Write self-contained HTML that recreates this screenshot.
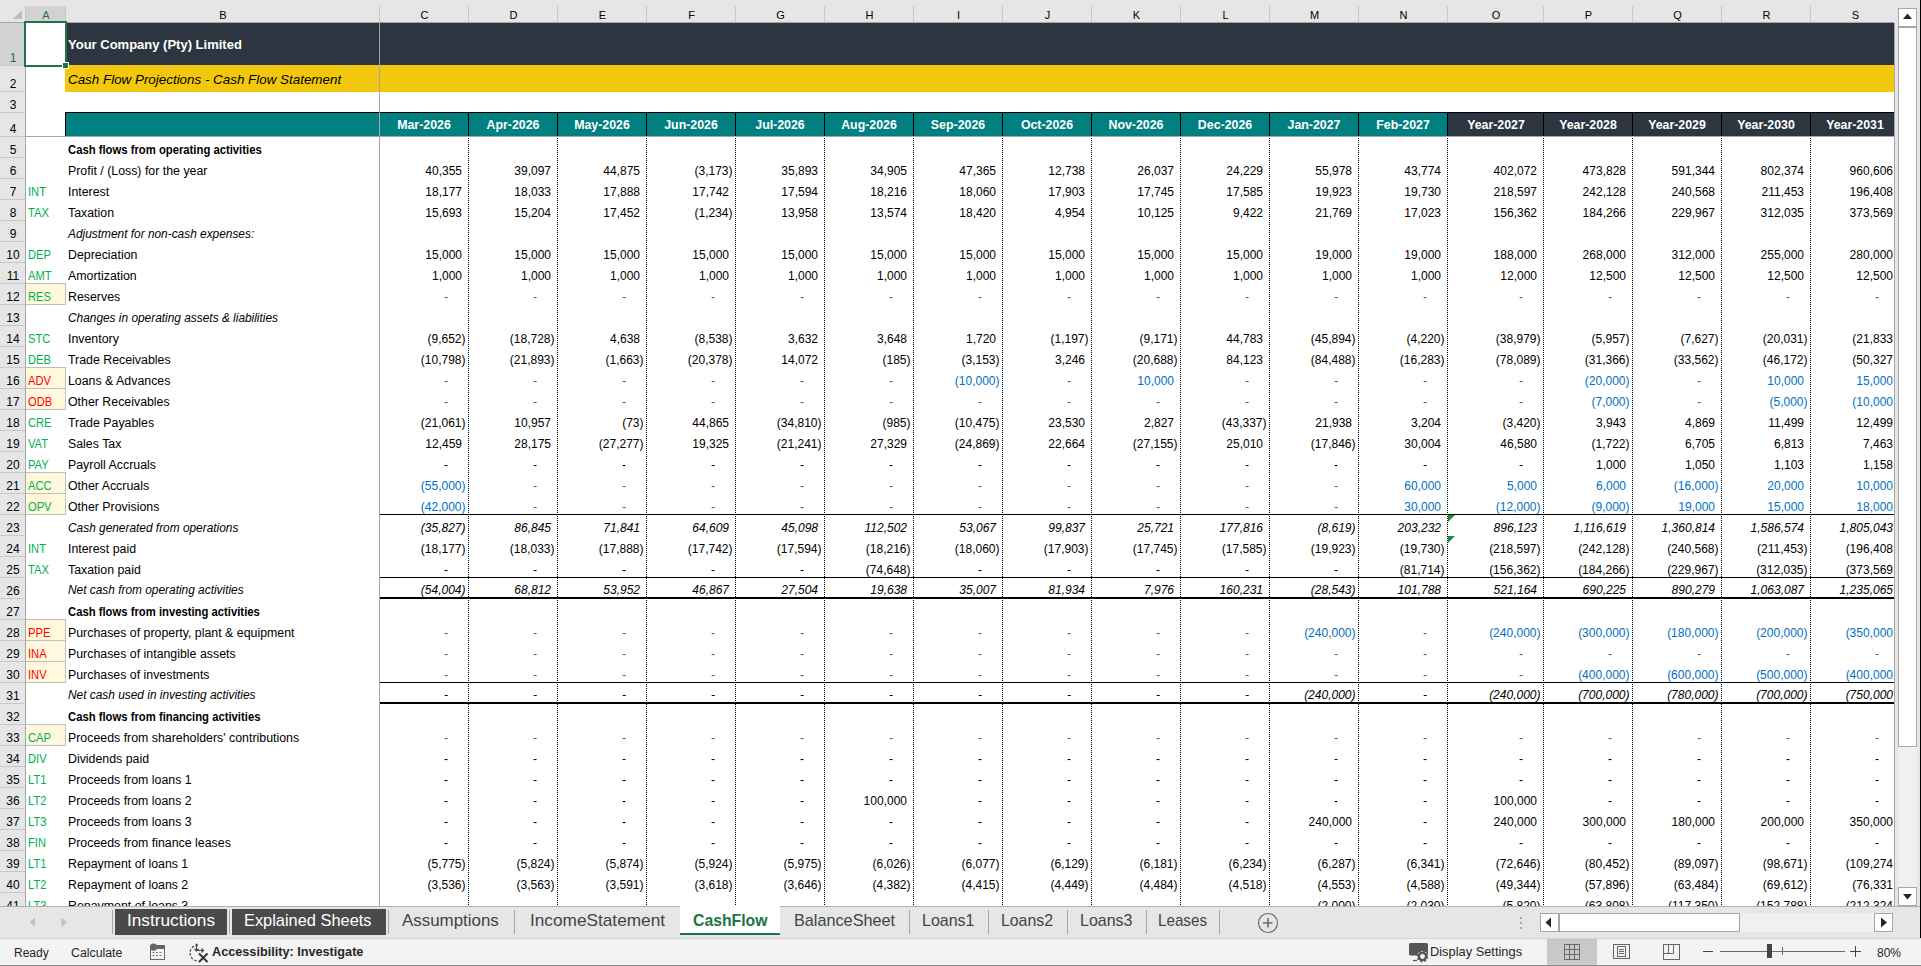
<!DOCTYPE html><html><head><meta charset="utf-8"><style>html,body{margin:0;padding:0;width:1921px;height:966px;overflow:hidden;background:#fff;}body{position:relative;font-family:"Liberation Sans", sans-serif;}div{position:absolute;box-sizing:border-box;}.t{white-space:pre;}svg{position:absolute;}</style></head><body><div style="left:0;top:0;width:1894px;height:906px;overflow:hidden;background:#fff;"><div style="left:65px;top:23px;width:1829px;height:42px;background:#2d3640;"></div><div style="left:65px;top:65px;width:1829px;height:27px;background:#f2c80f;"></div><div style="left:65px;top:112px;width:1829px;height:1px;background:#000;"></div><div style="left:65px;top:113px;width:1382px;height:23px;background:#008080;"></div><div style="left:1447px;top:113px;width:447px;height:23px;background:#2d3640;"></div><div style="left:65px;top:112px;width:1px;height:24px;background:#000;"></div><div style="left:468px;top:112px;width:1px;height:24px;background:#000;"></div><div style="left:557px;top:112px;width:1px;height:24px;background:#000;"></div><div style="left:646px;top:112px;width:1px;height:24px;background:#000;"></div><div style="left:735px;top:112px;width:1px;height:24px;background:#000;"></div><div style="left:824px;top:112px;width:1px;height:24px;background:#000;"></div><div style="left:913px;top:112px;width:1px;height:24px;background:#000;"></div><div style="left:1002px;top:112px;width:1px;height:24px;background:#000;"></div><div style="left:1091px;top:112px;width:1px;height:24px;background:#000;"></div><div style="left:1180px;top:112px;width:1px;height:24px;background:#000;"></div><div style="left:1269px;top:112px;width:1px;height:24px;background:#000;"></div><div style="left:1358px;top:112px;width:1px;height:24px;background:#000;"></div><div style="left:1447px;top:112px;width:1px;height:24px;background:#000;"></div><div style="left:1543px;top:112px;width:1px;height:24px;background:#000;"></div><div style="left:1632px;top:112px;width:1px;height:24px;background:#000;"></div><div style="left:1721px;top:112px;width:1px;height:24px;background:#000;"></div><div style="left:1810px;top:112px;width:1px;height:24px;background:#000;"></div><div style="left:25px;top:283px;width:41px;height:22px;background:#fff8dc;border:1px solid #bfbfbf;"></div><div style="left:25px;top:367px;width:41px;height:22px;background:#fff8dc;border:1px solid #bfbfbf;"></div><div style="left:25px;top:388px;width:41px;height:22px;background:#fff8dc;border:1px solid #bfbfbf;"></div><div style="left:25px;top:472px;width:41px;height:22px;background:#fff8dc;border:1px solid #bfbfbf;"></div><div style="left:25px;top:493px;width:41px;height:22px;background:#fff8dc;border:1px solid #bfbfbf;"></div><div style="left:25px;top:619px;width:41px;height:22px;background:#fff8dc;border:1px solid #bfbfbf;"></div><div style="left:25px;top:640px;width:41px;height:22px;background:#fff8dc;border:1px solid #bfbfbf;"></div><div style="left:25px;top:661px;width:41px;height:22px;background:#fff8dc;border:1px solid #bfbfbf;"></div><div style="left:25px;top:724px;width:41px;height:22px;background:#fff8dc;border:1px solid #bfbfbf;"></div><div style="left:468px;top:138px;width:1px;height:768px;background:repeating-linear-gradient(to bottom,#000 0,#000 1px,transparent 1px,transparent 2px);"></div><div style="left:557px;top:138px;width:1px;height:768px;background:repeating-linear-gradient(to bottom,#000 0,#000 1px,transparent 1px,transparent 2px);"></div><div style="left:646px;top:138px;width:1px;height:768px;background:repeating-linear-gradient(to bottom,#000 0,#000 1px,transparent 1px,transparent 2px);"></div><div style="left:735px;top:138px;width:1px;height:768px;background:repeating-linear-gradient(to bottom,#000 0,#000 1px,transparent 1px,transparent 2px);"></div><div style="left:824px;top:138px;width:1px;height:768px;background:repeating-linear-gradient(to bottom,#000 0,#000 1px,transparent 1px,transparent 2px);"></div><div style="left:913px;top:138px;width:1px;height:768px;background:repeating-linear-gradient(to bottom,#000 0,#000 1px,transparent 1px,transparent 2px);"></div><div style="left:1002px;top:138px;width:1px;height:768px;background:repeating-linear-gradient(to bottom,#000 0,#000 1px,transparent 1px,transparent 2px);"></div><div style="left:1091px;top:138px;width:1px;height:768px;background:repeating-linear-gradient(to bottom,#000 0,#000 1px,transparent 1px,transparent 2px);"></div><div style="left:1180px;top:138px;width:1px;height:768px;background:repeating-linear-gradient(to bottom,#000 0,#000 1px,transparent 1px,transparent 2px);"></div><div style="left:1269px;top:138px;width:1px;height:768px;background:repeating-linear-gradient(to bottom,#000 0,#000 1px,transparent 1px,transparent 2px);"></div><div style="left:1358px;top:138px;width:1px;height:768px;background:repeating-linear-gradient(to bottom,#000 0,#000 1px,transparent 1px,transparent 2px);"></div><div style="left:1447px;top:138px;width:1px;height:768px;background:repeating-linear-gradient(to bottom,#000 0,#000 1px,transparent 1px,transparent 2px);"></div><div style="left:1543px;top:138px;width:1px;height:768px;background:repeating-linear-gradient(to bottom,#000 0,#000 1px,transparent 1px,transparent 2px);"></div><div style="left:1632px;top:138px;width:1px;height:768px;background:repeating-linear-gradient(to bottom,#000 0,#000 1px,transparent 1px,transparent 2px);"></div><div style="left:1721px;top:138px;width:1px;height:768px;background:repeating-linear-gradient(to bottom,#000 0,#000 1px,transparent 1px,transparent 2px);"></div><div style="left:1810px;top:138px;width:1px;height:768px;background:repeating-linear-gradient(to bottom,#000 0,#000 1px,transparent 1px,transparent 2px);"></div><div style="left:379px;top:514px;width:1515px;height:1px;background:#000;"></div><div style="left:379px;top:577px;width:1515px;height:1px;background:#000;"></div><div style="left:379px;top:597px;width:1515px;height:2px;background:#000;"></div><div style="left:379px;top:682px;width:1515px;height:1px;background:#000;"></div><div style="left:379px;top:702px;width:1515px;height:2px;background:#000;"></div><div class="t" style="left:68px;top:38.00px;font-size:13px;line-height:13px;color:#fff;font-weight:bold;">Your Company (Pty) Limited</div><div class="t" style="left:68px;top:72.66px;font-size:13.4px;line-height:13.4px;color:#000;font-style:italic;">Cash Flow Projections - Cash Flow Statement</div><div class="t" style="left:224.0px;width:400px;text-align:center;top:118.84px;font-size:12px;line-height:12px;color:#fff;font-weight:bold;transform:scaleX(1.03);transform-origin:center center;">Mar-2026</div><div class="t" style="left:313.0px;width:400px;text-align:center;top:118.84px;font-size:12px;line-height:12px;color:#fff;font-weight:bold;transform:scaleX(1.03);transform-origin:center center;">Apr-2026</div><div class="t" style="left:402.0px;width:400px;text-align:center;top:118.84px;font-size:12px;line-height:12px;color:#fff;font-weight:bold;transform:scaleX(1.03);transform-origin:center center;">May-2026</div><div class="t" style="left:491.0px;width:400px;text-align:center;top:118.84px;font-size:12px;line-height:12px;color:#fff;font-weight:bold;transform:scaleX(1.03);transform-origin:center center;">Jun-2026</div><div class="t" style="left:580.0px;width:400px;text-align:center;top:118.84px;font-size:12px;line-height:12px;color:#fff;font-weight:bold;transform:scaleX(1.03);transform-origin:center center;">Jul-2026</div><div class="t" style="left:669.0px;width:400px;text-align:center;top:118.84px;font-size:12px;line-height:12px;color:#fff;font-weight:bold;transform:scaleX(1.03);transform-origin:center center;">Aug-2026</div><div class="t" style="left:758.0px;width:400px;text-align:center;top:118.84px;font-size:12px;line-height:12px;color:#fff;font-weight:bold;transform:scaleX(1.03);transform-origin:center center;">Sep-2026</div><div class="t" style="left:847.0px;width:400px;text-align:center;top:118.84px;font-size:12px;line-height:12px;color:#fff;font-weight:bold;transform:scaleX(1.03);transform-origin:center center;">Oct-2026</div><div class="t" style="left:936.0px;width:400px;text-align:center;top:118.84px;font-size:12px;line-height:12px;color:#fff;font-weight:bold;transform:scaleX(1.03);transform-origin:center center;">Nov-2026</div><div class="t" style="left:1025.0px;width:400px;text-align:center;top:118.84px;font-size:12px;line-height:12px;color:#fff;font-weight:bold;transform:scaleX(1.03);transform-origin:center center;">Dec-2026</div><div class="t" style="left:1114.0px;width:400px;text-align:center;top:118.84px;font-size:12px;line-height:12px;color:#fff;font-weight:bold;transform:scaleX(1.03);transform-origin:center center;">Jan-2027</div><div class="t" style="left:1203.0px;width:400px;text-align:center;top:118.84px;font-size:12px;line-height:12px;color:#fff;font-weight:bold;transform:scaleX(1.03);transform-origin:center center;">Feb-2027</div><div class="t" style="left:1295.5px;width:400px;text-align:center;top:118.84px;font-size:12px;line-height:12px;color:#fff;font-weight:bold;transform:scaleX(1.03);transform-origin:center center;">Year-2027</div><div class="t" style="left:1388.0px;width:400px;text-align:center;top:118.84px;font-size:12px;line-height:12px;color:#fff;font-weight:bold;transform:scaleX(1.03);transform-origin:center center;">Year-2028</div><div class="t" style="left:1477.0px;width:400px;text-align:center;top:118.84px;font-size:12px;line-height:12px;color:#fff;font-weight:bold;transform:scaleX(1.03);transform-origin:center center;">Year-2029</div><div class="t" style="left:1566.0px;width:400px;text-align:center;top:118.84px;font-size:12px;line-height:12px;color:#fff;font-weight:bold;transform:scaleX(1.03);transform-origin:center center;">Year-2030</div><div class="t" style="left:1655.0px;width:400px;text-align:center;top:118.84px;font-size:12px;line-height:12px;color:#fff;font-weight:bold;transform:scaleX(1.03);transform-origin:center center;">Year-2031</div><div class="t" style="left:68px;top:143.84px;font-size:12px;line-height:12px;color:#000;font-weight:bold;transform:scaleX(0.94);transform-origin:left center;">Cash flows from operating activities</div><div class="t" style="left:68px;top:164.84px;font-size:12px;line-height:12px;color:#000;transform:scaleX(1.03);transform-origin:left center;">Profit / (Loss) for the year</div><div class="t" style="left:62px;width:400px;text-align:right;top:164.84px;font-size:12px;line-height:12px;color:#000;">40,355</div><div class="t" style="left:151px;width:400px;text-align:right;top:164.84px;font-size:12px;line-height:12px;color:#000;">39,097</div><div class="t" style="left:240px;width:400px;text-align:right;top:164.84px;font-size:12px;line-height:12px;color:#000;">44,875</div><div class="t" style="left:332.5px;width:400px;text-align:right;top:164.84px;font-size:12px;line-height:12px;color:#000;">(3,173)</div><div class="t" style="left:418px;width:400px;text-align:right;top:164.84px;font-size:12px;line-height:12px;color:#000;">35,893</div><div class="t" style="left:507px;width:400px;text-align:right;top:164.84px;font-size:12px;line-height:12px;color:#000;">34,905</div><div class="t" style="left:596px;width:400px;text-align:right;top:164.84px;font-size:12px;line-height:12px;color:#000;">47,365</div><div class="t" style="left:685px;width:400px;text-align:right;top:164.84px;font-size:12px;line-height:12px;color:#000;">12,738</div><div class="t" style="left:774px;width:400px;text-align:right;top:164.84px;font-size:12px;line-height:12px;color:#000;">26,037</div><div class="t" style="left:863px;width:400px;text-align:right;top:164.84px;font-size:12px;line-height:12px;color:#000;">24,229</div><div class="t" style="left:952px;width:400px;text-align:right;top:164.84px;font-size:12px;line-height:12px;color:#000;">55,978</div><div class="t" style="left:1041px;width:400px;text-align:right;top:164.84px;font-size:12px;line-height:12px;color:#000;">43,774</div><div class="t" style="left:1137px;width:400px;text-align:right;top:164.84px;font-size:12px;line-height:12px;color:#000;">402,072</div><div class="t" style="left:1226px;width:400px;text-align:right;top:164.84px;font-size:12px;line-height:12px;color:#000;">473,828</div><div class="t" style="left:1315px;width:400px;text-align:right;top:164.84px;font-size:12px;line-height:12px;color:#000;">591,344</div><div class="t" style="left:1404px;width:400px;text-align:right;top:164.84px;font-size:12px;line-height:12px;color:#000;">802,374</div><div class="t" style="left:1493px;width:400px;text-align:right;top:164.84px;font-size:12px;line-height:12px;color:#000;">960,606</div><div class="t" style="left:28px;top:185.84px;font-size:12px;line-height:12px;color:#00b050;transform:scaleX(0.93);transform-origin:left center;">INT</div><div class="t" style="left:68px;top:185.84px;font-size:12px;line-height:12px;color:#000;transform:scaleX(1.03);transform-origin:left center;">Interest</div><div class="t" style="left:62px;width:400px;text-align:right;top:185.84px;font-size:12px;line-height:12px;color:#000;">18,177</div><div class="t" style="left:151px;width:400px;text-align:right;top:185.84px;font-size:12px;line-height:12px;color:#000;">18,033</div><div class="t" style="left:240px;width:400px;text-align:right;top:185.84px;font-size:12px;line-height:12px;color:#000;">17,888</div><div class="t" style="left:329px;width:400px;text-align:right;top:185.84px;font-size:12px;line-height:12px;color:#000;">17,742</div><div class="t" style="left:418px;width:400px;text-align:right;top:185.84px;font-size:12px;line-height:12px;color:#000;">17,594</div><div class="t" style="left:507px;width:400px;text-align:right;top:185.84px;font-size:12px;line-height:12px;color:#000;">18,216</div><div class="t" style="left:596px;width:400px;text-align:right;top:185.84px;font-size:12px;line-height:12px;color:#000;">18,060</div><div class="t" style="left:685px;width:400px;text-align:right;top:185.84px;font-size:12px;line-height:12px;color:#000;">17,903</div><div class="t" style="left:774px;width:400px;text-align:right;top:185.84px;font-size:12px;line-height:12px;color:#000;">17,745</div><div class="t" style="left:863px;width:400px;text-align:right;top:185.84px;font-size:12px;line-height:12px;color:#000;">17,585</div><div class="t" style="left:952px;width:400px;text-align:right;top:185.84px;font-size:12px;line-height:12px;color:#000;">19,923</div><div class="t" style="left:1041px;width:400px;text-align:right;top:185.84px;font-size:12px;line-height:12px;color:#000;">19,730</div><div class="t" style="left:1137px;width:400px;text-align:right;top:185.84px;font-size:12px;line-height:12px;color:#000;">218,597</div><div class="t" style="left:1226px;width:400px;text-align:right;top:185.84px;font-size:12px;line-height:12px;color:#000;">242,128</div><div class="t" style="left:1315px;width:400px;text-align:right;top:185.84px;font-size:12px;line-height:12px;color:#000;">240,568</div><div class="t" style="left:1404px;width:400px;text-align:right;top:185.84px;font-size:12px;line-height:12px;color:#000;">211,453</div><div class="t" style="left:1493px;width:400px;text-align:right;top:185.84px;font-size:12px;line-height:12px;color:#000;">196,408</div><div class="t" style="left:28px;top:206.84px;font-size:12px;line-height:12px;color:#00b050;transform:scaleX(0.93);transform-origin:left center;">TAX</div><div class="t" style="left:68px;top:206.84px;font-size:12px;line-height:12px;color:#000;transform:scaleX(1.03);transform-origin:left center;">Taxation</div><div class="t" style="left:62px;width:400px;text-align:right;top:206.84px;font-size:12px;line-height:12px;color:#000;">15,693</div><div class="t" style="left:151px;width:400px;text-align:right;top:206.84px;font-size:12px;line-height:12px;color:#000;">15,204</div><div class="t" style="left:240px;width:400px;text-align:right;top:206.84px;font-size:12px;line-height:12px;color:#000;">17,452</div><div class="t" style="left:332.5px;width:400px;text-align:right;top:206.84px;font-size:12px;line-height:12px;color:#000;">(1,234)</div><div class="t" style="left:418px;width:400px;text-align:right;top:206.84px;font-size:12px;line-height:12px;color:#000;">13,958</div><div class="t" style="left:507px;width:400px;text-align:right;top:206.84px;font-size:12px;line-height:12px;color:#000;">13,574</div><div class="t" style="left:596px;width:400px;text-align:right;top:206.84px;font-size:12px;line-height:12px;color:#000;">18,420</div><div class="t" style="left:685px;width:400px;text-align:right;top:206.84px;font-size:12px;line-height:12px;color:#000;">4,954</div><div class="t" style="left:774px;width:400px;text-align:right;top:206.84px;font-size:12px;line-height:12px;color:#000;">10,125</div><div class="t" style="left:863px;width:400px;text-align:right;top:206.84px;font-size:12px;line-height:12px;color:#000;">9,422</div><div class="t" style="left:952px;width:400px;text-align:right;top:206.84px;font-size:12px;line-height:12px;color:#000;">21,769</div><div class="t" style="left:1041px;width:400px;text-align:right;top:206.84px;font-size:12px;line-height:12px;color:#000;">17,023</div><div class="t" style="left:1137px;width:400px;text-align:right;top:206.84px;font-size:12px;line-height:12px;color:#000;">156,362</div><div class="t" style="left:1226px;width:400px;text-align:right;top:206.84px;font-size:12px;line-height:12px;color:#000;">184,266</div><div class="t" style="left:1315px;width:400px;text-align:right;top:206.84px;font-size:12px;line-height:12px;color:#000;">229,967</div><div class="t" style="left:1404px;width:400px;text-align:right;top:206.84px;font-size:12px;line-height:12px;color:#000;">312,035</div><div class="t" style="left:1493px;width:400px;text-align:right;top:206.84px;font-size:12px;line-height:12px;color:#000;">373,569</div><div class="t" style="left:68px;top:227.84px;font-size:12px;line-height:12px;color:#000;font-style:italic;transform:scaleX(0.99);transform-origin:left center;">Adjustment for non-cash expenses:</div><div class="t" style="left:28px;top:248.84px;font-size:12px;line-height:12px;color:#00b050;transform:scaleX(0.93);transform-origin:left center;">DEP</div><div class="t" style="left:68px;top:248.84px;font-size:12px;line-height:12px;color:#000;transform:scaleX(1.03);transform-origin:left center;">Depreciation</div><div class="t" style="left:62px;width:400px;text-align:right;top:248.84px;font-size:12px;line-height:12px;color:#000;">15,000</div><div class="t" style="left:151px;width:400px;text-align:right;top:248.84px;font-size:12px;line-height:12px;color:#000;">15,000</div><div class="t" style="left:240px;width:400px;text-align:right;top:248.84px;font-size:12px;line-height:12px;color:#000;">15,000</div><div class="t" style="left:329px;width:400px;text-align:right;top:248.84px;font-size:12px;line-height:12px;color:#000;">15,000</div><div class="t" style="left:418px;width:400px;text-align:right;top:248.84px;font-size:12px;line-height:12px;color:#000;">15,000</div><div class="t" style="left:507px;width:400px;text-align:right;top:248.84px;font-size:12px;line-height:12px;color:#000;">15,000</div><div class="t" style="left:596px;width:400px;text-align:right;top:248.84px;font-size:12px;line-height:12px;color:#000;">15,000</div><div class="t" style="left:685px;width:400px;text-align:right;top:248.84px;font-size:12px;line-height:12px;color:#000;">15,000</div><div class="t" style="left:774px;width:400px;text-align:right;top:248.84px;font-size:12px;line-height:12px;color:#000;">15,000</div><div class="t" style="left:863px;width:400px;text-align:right;top:248.84px;font-size:12px;line-height:12px;color:#000;">15,000</div><div class="t" style="left:952px;width:400px;text-align:right;top:248.84px;font-size:12px;line-height:12px;color:#000;">19,000</div><div class="t" style="left:1041px;width:400px;text-align:right;top:248.84px;font-size:12px;line-height:12px;color:#000;">19,000</div><div class="t" style="left:1137px;width:400px;text-align:right;top:248.84px;font-size:12px;line-height:12px;color:#000;">188,000</div><div class="t" style="left:1226px;width:400px;text-align:right;top:248.84px;font-size:12px;line-height:12px;color:#000;">268,000</div><div class="t" style="left:1315px;width:400px;text-align:right;top:248.84px;font-size:12px;line-height:12px;color:#000;">312,000</div><div class="t" style="left:1404px;width:400px;text-align:right;top:248.84px;font-size:12px;line-height:12px;color:#000;">255,000</div><div class="t" style="left:1493px;width:400px;text-align:right;top:248.84px;font-size:12px;line-height:12px;color:#000;">280,000</div><div class="t" style="left:28px;top:269.84px;font-size:12px;line-height:12px;color:#00b050;transform:scaleX(0.93);transform-origin:left center;">AMT</div><div class="t" style="left:68px;top:269.84px;font-size:12px;line-height:12px;color:#000;transform:scaleX(1.03);transform-origin:left center;">Amortization</div><div class="t" style="left:62px;width:400px;text-align:right;top:269.84px;font-size:12px;line-height:12px;color:#000;">1,000</div><div class="t" style="left:151px;width:400px;text-align:right;top:269.84px;font-size:12px;line-height:12px;color:#000;">1,000</div><div class="t" style="left:240px;width:400px;text-align:right;top:269.84px;font-size:12px;line-height:12px;color:#000;">1,000</div><div class="t" style="left:329px;width:400px;text-align:right;top:269.84px;font-size:12px;line-height:12px;color:#000;">1,000</div><div class="t" style="left:418px;width:400px;text-align:right;top:269.84px;font-size:12px;line-height:12px;color:#000;">1,000</div><div class="t" style="left:507px;width:400px;text-align:right;top:269.84px;font-size:12px;line-height:12px;color:#000;">1,000</div><div class="t" style="left:596px;width:400px;text-align:right;top:269.84px;font-size:12px;line-height:12px;color:#000;">1,000</div><div class="t" style="left:685px;width:400px;text-align:right;top:269.84px;font-size:12px;line-height:12px;color:#000;">1,000</div><div class="t" style="left:774px;width:400px;text-align:right;top:269.84px;font-size:12px;line-height:12px;color:#000;">1,000</div><div class="t" style="left:863px;width:400px;text-align:right;top:269.84px;font-size:12px;line-height:12px;color:#000;">1,000</div><div class="t" style="left:952px;width:400px;text-align:right;top:269.84px;font-size:12px;line-height:12px;color:#000;">1,000</div><div class="t" style="left:1041px;width:400px;text-align:right;top:269.84px;font-size:12px;line-height:12px;color:#000;">1,000</div><div class="t" style="left:1137px;width:400px;text-align:right;top:269.84px;font-size:12px;line-height:12px;color:#000;">12,000</div><div class="t" style="left:1226px;width:400px;text-align:right;top:269.84px;font-size:12px;line-height:12px;color:#000;">12,500</div><div class="t" style="left:1315px;width:400px;text-align:right;top:269.84px;font-size:12px;line-height:12px;color:#000;">12,500</div><div class="t" style="left:1404px;width:400px;text-align:right;top:269.84px;font-size:12px;line-height:12px;color:#000;">12,500</div><div class="t" style="left:1493px;width:400px;text-align:right;top:269.84px;font-size:12px;line-height:12px;color:#000;">12,500</div><div class="t" style="left:28px;top:290.84px;font-size:12px;line-height:12px;color:#00b050;transform:scaleX(0.93);transform-origin:left center;">RES</div><div class="t" style="left:68px;top:290.84px;font-size:12px;line-height:12px;color:#000;transform:scaleX(1.03);transform-origin:left center;">Reserves</div><div class="t" style="left:246px;width:400px;text-align:center;top:290.84px;font-size:12px;line-height:12px;color:#0070c0;">-</div><div class="t" style="left:335px;width:400px;text-align:center;top:290.84px;font-size:12px;line-height:12px;color:#0070c0;">-</div><div class="t" style="left:424px;width:400px;text-align:center;top:290.84px;font-size:12px;line-height:12px;color:#0070c0;">-</div><div class="t" style="left:513px;width:400px;text-align:center;top:290.84px;font-size:12px;line-height:12px;color:#0070c0;">-</div><div class="t" style="left:602px;width:400px;text-align:center;top:290.84px;font-size:12px;line-height:12px;color:#0070c0;">-</div><div class="t" style="left:691px;width:400px;text-align:center;top:290.84px;font-size:12px;line-height:12px;color:#0070c0;">-</div><div class="t" style="left:780px;width:400px;text-align:center;top:290.84px;font-size:12px;line-height:12px;color:#0070c0;">-</div><div class="t" style="left:869px;width:400px;text-align:center;top:290.84px;font-size:12px;line-height:12px;color:#0070c0;">-</div><div class="t" style="left:958px;width:400px;text-align:center;top:290.84px;font-size:12px;line-height:12px;color:#0070c0;">-</div><div class="t" style="left:1047px;width:400px;text-align:center;top:290.84px;font-size:12px;line-height:12px;color:#0070c0;">-</div><div class="t" style="left:1136px;width:400px;text-align:center;top:290.84px;font-size:12px;line-height:12px;color:#0070c0;">-</div><div class="t" style="left:1225px;width:400px;text-align:center;top:290.84px;font-size:12px;line-height:12px;color:#0070c0;">-</div><div class="t" style="left:1321px;width:400px;text-align:center;top:290.84px;font-size:12px;line-height:12px;color:#0070c0;">-</div><div class="t" style="left:1410px;width:400px;text-align:center;top:290.84px;font-size:12px;line-height:12px;color:#0070c0;">-</div><div class="t" style="left:1499px;width:400px;text-align:center;top:290.84px;font-size:12px;line-height:12px;color:#0070c0;">-</div><div class="t" style="left:1588px;width:400px;text-align:center;top:290.84px;font-size:12px;line-height:12px;color:#0070c0;">-</div><div class="t" style="left:1677px;width:400px;text-align:center;top:290.84px;font-size:12px;line-height:12px;color:#0070c0;">-</div><div class="t" style="left:68px;top:311.84px;font-size:12px;line-height:12px;color:#000;font-style:italic;transform:scaleX(0.99);transform-origin:left center;">Changes in operating assets &amp; liabilities</div><div class="t" style="left:28px;top:332.84px;font-size:12px;line-height:12px;color:#00b050;transform:scaleX(0.93);transform-origin:left center;">STC</div><div class="t" style="left:68px;top:332.84px;font-size:12px;line-height:12px;color:#000;transform:scaleX(1.03);transform-origin:left center;">Inventory</div><div class="t" style="left:65.5px;width:400px;text-align:right;top:332.84px;font-size:12px;line-height:12px;color:#000;">(9,652)</div><div class="t" style="left:154.5px;width:400px;text-align:right;top:332.84px;font-size:12px;line-height:12px;color:#000;">(18,728)</div><div class="t" style="left:240px;width:400px;text-align:right;top:332.84px;font-size:12px;line-height:12px;color:#000;">4,638</div><div class="t" style="left:332.5px;width:400px;text-align:right;top:332.84px;font-size:12px;line-height:12px;color:#000;">(8,538)</div><div class="t" style="left:418px;width:400px;text-align:right;top:332.84px;font-size:12px;line-height:12px;color:#000;">3,632</div><div class="t" style="left:507px;width:400px;text-align:right;top:332.84px;font-size:12px;line-height:12px;color:#000;">3,648</div><div class="t" style="left:596px;width:400px;text-align:right;top:332.84px;font-size:12px;line-height:12px;color:#000;">1,720</div><div class="t" style="left:688.5px;width:400px;text-align:right;top:332.84px;font-size:12px;line-height:12px;color:#000;">(1,197)</div><div class="t" style="left:777.5px;width:400px;text-align:right;top:332.84px;font-size:12px;line-height:12px;color:#000;">(9,171)</div><div class="t" style="left:863px;width:400px;text-align:right;top:332.84px;font-size:12px;line-height:12px;color:#000;">44,783</div><div class="t" style="left:955.5px;width:400px;text-align:right;top:332.84px;font-size:12px;line-height:12px;color:#000;">(45,894)</div><div class="t" style="left:1044.5px;width:400px;text-align:right;top:332.84px;font-size:12px;line-height:12px;color:#000;">(4,220)</div><div class="t" style="left:1140.5px;width:400px;text-align:right;top:332.84px;font-size:12px;line-height:12px;color:#000;">(38,979)</div><div class="t" style="left:1229.5px;width:400px;text-align:right;top:332.84px;font-size:12px;line-height:12px;color:#000;">(5,957)</div><div class="t" style="left:1318.5px;width:400px;text-align:right;top:332.84px;font-size:12px;line-height:12px;color:#000;">(7,627)</div><div class="t" style="left:1407.5px;width:400px;text-align:right;top:332.84px;font-size:12px;line-height:12px;color:#000;">(20,031)</div><div class="t" style="left:1493px;width:400px;text-align:right;top:332.84px;font-size:12px;line-height:12px;color:#000;">(21,833</div><div class="t" style="left:28px;top:353.84px;font-size:12px;line-height:12px;color:#00b050;transform:scaleX(0.93);transform-origin:left center;">DEB</div><div class="t" style="left:68px;top:353.84px;font-size:12px;line-height:12px;color:#000;transform:scaleX(1.03);transform-origin:left center;">Trade Receivables</div><div class="t" style="left:65.5px;width:400px;text-align:right;top:353.84px;font-size:12px;line-height:12px;color:#000;">(10,798)</div><div class="t" style="left:154.5px;width:400px;text-align:right;top:353.84px;font-size:12px;line-height:12px;color:#000;">(21,893)</div><div class="t" style="left:243.5px;width:400px;text-align:right;top:353.84px;font-size:12px;line-height:12px;color:#000;">(1,663)</div><div class="t" style="left:332.5px;width:400px;text-align:right;top:353.84px;font-size:12px;line-height:12px;color:#000;">(20,378)</div><div class="t" style="left:418px;width:400px;text-align:right;top:353.84px;font-size:12px;line-height:12px;color:#000;">14,072</div><div class="t" style="left:510.5px;width:400px;text-align:right;top:353.84px;font-size:12px;line-height:12px;color:#000;">(185)</div><div class="t" style="left:599.5px;width:400px;text-align:right;top:353.84px;font-size:12px;line-height:12px;color:#000;">(3,153)</div><div class="t" style="left:685px;width:400px;text-align:right;top:353.84px;font-size:12px;line-height:12px;color:#000;">3,246</div><div class="t" style="left:777.5px;width:400px;text-align:right;top:353.84px;font-size:12px;line-height:12px;color:#000;">(20,688)</div><div class="t" style="left:863px;width:400px;text-align:right;top:353.84px;font-size:12px;line-height:12px;color:#000;">84,123</div><div class="t" style="left:955.5px;width:400px;text-align:right;top:353.84px;font-size:12px;line-height:12px;color:#000;">(84,488)</div><div class="t" style="left:1044.5px;width:400px;text-align:right;top:353.84px;font-size:12px;line-height:12px;color:#000;">(16,283)</div><div class="t" style="left:1140.5px;width:400px;text-align:right;top:353.84px;font-size:12px;line-height:12px;color:#000;">(78,089)</div><div class="t" style="left:1229.5px;width:400px;text-align:right;top:353.84px;font-size:12px;line-height:12px;color:#000;">(31,366)</div><div class="t" style="left:1318.5px;width:400px;text-align:right;top:353.84px;font-size:12px;line-height:12px;color:#000;">(33,562)</div><div class="t" style="left:1407.5px;width:400px;text-align:right;top:353.84px;font-size:12px;line-height:12px;color:#000;">(46,172)</div><div class="t" style="left:1493px;width:400px;text-align:right;top:353.84px;font-size:12px;line-height:12px;color:#000;">(50,327</div><div class="t" style="left:28px;top:374.84px;font-size:12px;line-height:12px;color:#ff0000;transform:scaleX(0.93);transform-origin:left center;">ADV</div><div class="t" style="left:68px;top:374.84px;font-size:12px;line-height:12px;color:#000;transform:scaleX(1.03);transform-origin:left center;">Loans &amp; Advances</div><div class="t" style="left:246px;width:400px;text-align:center;top:374.84px;font-size:12px;line-height:12px;color:#0070c0;">-</div><div class="t" style="left:335px;width:400px;text-align:center;top:374.84px;font-size:12px;line-height:12px;color:#0070c0;">-</div><div class="t" style="left:424px;width:400px;text-align:center;top:374.84px;font-size:12px;line-height:12px;color:#0070c0;">-</div><div class="t" style="left:513px;width:400px;text-align:center;top:374.84px;font-size:12px;line-height:12px;color:#0070c0;">-</div><div class="t" style="left:602px;width:400px;text-align:center;top:374.84px;font-size:12px;line-height:12px;color:#0070c0;">-</div><div class="t" style="left:691px;width:400px;text-align:center;top:374.84px;font-size:12px;line-height:12px;color:#0070c0;">-</div><div class="t" style="left:599.5px;width:400px;text-align:right;top:374.84px;font-size:12px;line-height:12px;color:#0070c0;">(10,000)</div><div class="t" style="left:869px;width:400px;text-align:center;top:374.84px;font-size:12px;line-height:12px;color:#0070c0;">-</div><div class="t" style="left:774px;width:400px;text-align:right;top:374.84px;font-size:12px;line-height:12px;color:#0070c0;">10,000</div><div class="t" style="left:1047px;width:400px;text-align:center;top:374.84px;font-size:12px;line-height:12px;color:#0070c0;">-</div><div class="t" style="left:1136px;width:400px;text-align:center;top:374.84px;font-size:12px;line-height:12px;color:#0070c0;">-</div><div class="t" style="left:1225px;width:400px;text-align:center;top:374.84px;font-size:12px;line-height:12px;color:#0070c0;">-</div><div class="t" style="left:1321px;width:400px;text-align:center;top:374.84px;font-size:12px;line-height:12px;color:#0070c0;">-</div><div class="t" style="left:1229.5px;width:400px;text-align:right;top:374.84px;font-size:12px;line-height:12px;color:#0070c0;">(20,000)</div><div class="t" style="left:1499px;width:400px;text-align:center;top:374.84px;font-size:12px;line-height:12px;color:#0070c0;">-</div><div class="t" style="left:1404px;width:400px;text-align:right;top:374.84px;font-size:12px;line-height:12px;color:#0070c0;">10,000</div><div class="t" style="left:1493px;width:400px;text-align:right;top:374.84px;font-size:12px;line-height:12px;color:#0070c0;">15,000</div><div class="t" style="left:28px;top:395.84px;font-size:12px;line-height:12px;color:#ff0000;transform:scaleX(0.93);transform-origin:left center;">ODB</div><div class="t" style="left:68px;top:395.84px;font-size:12px;line-height:12px;color:#000;transform:scaleX(1.03);transform-origin:left center;">Other Receivables</div><div class="t" style="left:246px;width:400px;text-align:center;top:395.84px;font-size:12px;line-height:12px;color:#0070c0;">-</div><div class="t" style="left:335px;width:400px;text-align:center;top:395.84px;font-size:12px;line-height:12px;color:#0070c0;">-</div><div class="t" style="left:424px;width:400px;text-align:center;top:395.84px;font-size:12px;line-height:12px;color:#0070c0;">-</div><div class="t" style="left:513px;width:400px;text-align:center;top:395.84px;font-size:12px;line-height:12px;color:#0070c0;">-</div><div class="t" style="left:602px;width:400px;text-align:center;top:395.84px;font-size:12px;line-height:12px;color:#0070c0;">-</div><div class="t" style="left:691px;width:400px;text-align:center;top:395.84px;font-size:12px;line-height:12px;color:#0070c0;">-</div><div class="t" style="left:780px;width:400px;text-align:center;top:395.84px;font-size:12px;line-height:12px;color:#0070c0;">-</div><div class="t" style="left:869px;width:400px;text-align:center;top:395.84px;font-size:12px;line-height:12px;color:#0070c0;">-</div><div class="t" style="left:958px;width:400px;text-align:center;top:395.84px;font-size:12px;line-height:12px;color:#0070c0;">-</div><div class="t" style="left:1047px;width:400px;text-align:center;top:395.84px;font-size:12px;line-height:12px;color:#0070c0;">-</div><div class="t" style="left:1136px;width:400px;text-align:center;top:395.84px;font-size:12px;line-height:12px;color:#0070c0;">-</div><div class="t" style="left:1225px;width:400px;text-align:center;top:395.84px;font-size:12px;line-height:12px;color:#0070c0;">-</div><div class="t" style="left:1321px;width:400px;text-align:center;top:395.84px;font-size:12px;line-height:12px;color:#0070c0;">-</div><div class="t" style="left:1229.5px;width:400px;text-align:right;top:395.84px;font-size:12px;line-height:12px;color:#0070c0;">(7,000)</div><div class="t" style="left:1499px;width:400px;text-align:center;top:395.84px;font-size:12px;line-height:12px;color:#0070c0;">-</div><div class="t" style="left:1407.5px;width:400px;text-align:right;top:395.84px;font-size:12px;line-height:12px;color:#0070c0;">(5,000)</div><div class="t" style="left:1493px;width:400px;text-align:right;top:395.84px;font-size:12px;line-height:12px;color:#0070c0;">(10,000</div><div class="t" style="left:28px;top:416.84px;font-size:12px;line-height:12px;color:#00b050;transform:scaleX(0.93);transform-origin:left center;">CRE</div><div class="t" style="left:68px;top:416.84px;font-size:12px;line-height:12px;color:#000;transform:scaleX(1.03);transform-origin:left center;">Trade Payables</div><div class="t" style="left:65.5px;width:400px;text-align:right;top:416.84px;font-size:12px;line-height:12px;color:#000;">(21,061)</div><div class="t" style="left:151px;width:400px;text-align:right;top:416.84px;font-size:12px;line-height:12px;color:#000;">10,957</div><div class="t" style="left:243.5px;width:400px;text-align:right;top:416.84px;font-size:12px;line-height:12px;color:#000;">(73)</div><div class="t" style="left:329px;width:400px;text-align:right;top:416.84px;font-size:12px;line-height:12px;color:#000;">44,865</div><div class="t" style="left:421.5px;width:400px;text-align:right;top:416.84px;font-size:12px;line-height:12px;color:#000;">(34,810)</div><div class="t" style="left:510.5px;width:400px;text-align:right;top:416.84px;font-size:12px;line-height:12px;color:#000;">(985)</div><div class="t" style="left:599.5px;width:400px;text-align:right;top:416.84px;font-size:12px;line-height:12px;color:#000;">(10,475)</div><div class="t" style="left:685px;width:400px;text-align:right;top:416.84px;font-size:12px;line-height:12px;color:#000;">23,530</div><div class="t" style="left:774px;width:400px;text-align:right;top:416.84px;font-size:12px;line-height:12px;color:#000;">2,827</div><div class="t" style="left:866.5px;width:400px;text-align:right;top:416.84px;font-size:12px;line-height:12px;color:#000;">(43,337)</div><div class="t" style="left:952px;width:400px;text-align:right;top:416.84px;font-size:12px;line-height:12px;color:#000;">21,938</div><div class="t" style="left:1041px;width:400px;text-align:right;top:416.84px;font-size:12px;line-height:12px;color:#000;">3,204</div><div class="t" style="left:1140.5px;width:400px;text-align:right;top:416.84px;font-size:12px;line-height:12px;color:#000;">(3,420)</div><div class="t" style="left:1226px;width:400px;text-align:right;top:416.84px;font-size:12px;line-height:12px;color:#000;">3,943</div><div class="t" style="left:1315px;width:400px;text-align:right;top:416.84px;font-size:12px;line-height:12px;color:#000;">4,869</div><div class="t" style="left:1404px;width:400px;text-align:right;top:416.84px;font-size:12px;line-height:12px;color:#000;">11,499</div><div class="t" style="left:1493px;width:400px;text-align:right;top:416.84px;font-size:12px;line-height:12px;color:#000;">12,499</div><div class="t" style="left:28px;top:437.84px;font-size:12px;line-height:12px;color:#00b050;transform:scaleX(0.93);transform-origin:left center;">VAT</div><div class="t" style="left:68px;top:437.84px;font-size:12px;line-height:12px;color:#000;transform:scaleX(1.03);transform-origin:left center;">Sales Tax</div><div class="t" style="left:62px;width:400px;text-align:right;top:437.84px;font-size:12px;line-height:12px;color:#000;">12,459</div><div class="t" style="left:151px;width:400px;text-align:right;top:437.84px;font-size:12px;line-height:12px;color:#000;">28,175</div><div class="t" style="left:243.5px;width:400px;text-align:right;top:437.84px;font-size:12px;line-height:12px;color:#000;">(27,277)</div><div class="t" style="left:329px;width:400px;text-align:right;top:437.84px;font-size:12px;line-height:12px;color:#000;">19,325</div><div class="t" style="left:421.5px;width:400px;text-align:right;top:437.84px;font-size:12px;line-height:12px;color:#000;">(21,241)</div><div class="t" style="left:507px;width:400px;text-align:right;top:437.84px;font-size:12px;line-height:12px;color:#000;">27,329</div><div class="t" style="left:599.5px;width:400px;text-align:right;top:437.84px;font-size:12px;line-height:12px;color:#000;">(24,869)</div><div class="t" style="left:685px;width:400px;text-align:right;top:437.84px;font-size:12px;line-height:12px;color:#000;">22,664</div><div class="t" style="left:777.5px;width:400px;text-align:right;top:437.84px;font-size:12px;line-height:12px;color:#000;">(27,155)</div><div class="t" style="left:863px;width:400px;text-align:right;top:437.84px;font-size:12px;line-height:12px;color:#000;">25,010</div><div class="t" style="left:955.5px;width:400px;text-align:right;top:437.84px;font-size:12px;line-height:12px;color:#000;">(17,846)</div><div class="t" style="left:1041px;width:400px;text-align:right;top:437.84px;font-size:12px;line-height:12px;color:#000;">30,004</div><div class="t" style="left:1137px;width:400px;text-align:right;top:437.84px;font-size:12px;line-height:12px;color:#000;">46,580</div><div class="t" style="left:1229.5px;width:400px;text-align:right;top:437.84px;font-size:12px;line-height:12px;color:#000;">(1,722)</div><div class="t" style="left:1315px;width:400px;text-align:right;top:437.84px;font-size:12px;line-height:12px;color:#000;">6,705</div><div class="t" style="left:1404px;width:400px;text-align:right;top:437.84px;font-size:12px;line-height:12px;color:#000;">6,813</div><div class="t" style="left:1493px;width:400px;text-align:right;top:437.84px;font-size:12px;line-height:12px;color:#000;">7,463</div><div class="t" style="left:28px;top:458.84px;font-size:12px;line-height:12px;color:#00b050;transform:scaleX(0.93);transform-origin:left center;">PAY</div><div class="t" style="left:68px;top:458.84px;font-size:12px;line-height:12px;color:#000;transform:scaleX(1.03);transform-origin:left center;">Payroll Accruals</div><div class="t" style="left:246px;width:400px;text-align:center;top:458.84px;font-size:12px;line-height:12px;color:#000;">-</div><div class="t" style="left:335px;width:400px;text-align:center;top:458.84px;font-size:12px;line-height:12px;color:#000;">-</div><div class="t" style="left:424px;width:400px;text-align:center;top:458.84px;font-size:12px;line-height:12px;color:#000;">-</div><div class="t" style="left:513px;width:400px;text-align:center;top:458.84px;font-size:12px;line-height:12px;color:#000;">-</div><div class="t" style="left:602px;width:400px;text-align:center;top:458.84px;font-size:12px;line-height:12px;color:#000;">-</div><div class="t" style="left:691px;width:400px;text-align:center;top:458.84px;font-size:12px;line-height:12px;color:#000;">-</div><div class="t" style="left:780px;width:400px;text-align:center;top:458.84px;font-size:12px;line-height:12px;color:#000;">-</div><div class="t" style="left:869px;width:400px;text-align:center;top:458.84px;font-size:12px;line-height:12px;color:#000;">-</div><div class="t" style="left:958px;width:400px;text-align:center;top:458.84px;font-size:12px;line-height:12px;color:#000;">-</div><div class="t" style="left:1047px;width:400px;text-align:center;top:458.84px;font-size:12px;line-height:12px;color:#000;">-</div><div class="t" style="left:1136px;width:400px;text-align:center;top:458.84px;font-size:12px;line-height:12px;color:#000;">-</div><div class="t" style="left:1225px;width:400px;text-align:center;top:458.84px;font-size:12px;line-height:12px;color:#000;">-</div><div class="t" style="left:1321px;width:400px;text-align:center;top:458.84px;font-size:12px;line-height:12px;color:#000;">-</div><div class="t" style="left:1226px;width:400px;text-align:right;top:458.84px;font-size:12px;line-height:12px;color:#000;">1,000</div><div class="t" style="left:1315px;width:400px;text-align:right;top:458.84px;font-size:12px;line-height:12px;color:#000;">1,050</div><div class="t" style="left:1404px;width:400px;text-align:right;top:458.84px;font-size:12px;line-height:12px;color:#000;">1,103</div><div class="t" style="left:1493px;width:400px;text-align:right;top:458.84px;font-size:12px;line-height:12px;color:#000;">1,158</div><div class="t" style="left:28px;top:479.84px;font-size:12px;line-height:12px;color:#00b050;transform:scaleX(0.93);transform-origin:left center;">ACC</div><div class="t" style="left:68px;top:479.84px;font-size:12px;line-height:12px;color:#000;transform:scaleX(1.03);transform-origin:left center;">Other Accruals</div><div class="t" style="left:65.5px;width:400px;text-align:right;top:479.84px;font-size:12px;line-height:12px;color:#0070c0;">(55,000)</div><div class="t" style="left:335px;width:400px;text-align:center;top:479.84px;font-size:12px;line-height:12px;color:#0070c0;">-</div><div class="t" style="left:424px;width:400px;text-align:center;top:479.84px;font-size:12px;line-height:12px;color:#0070c0;">-</div><div class="t" style="left:513px;width:400px;text-align:center;top:479.84px;font-size:12px;line-height:12px;color:#0070c0;">-</div><div class="t" style="left:602px;width:400px;text-align:center;top:479.84px;font-size:12px;line-height:12px;color:#0070c0;">-</div><div class="t" style="left:691px;width:400px;text-align:center;top:479.84px;font-size:12px;line-height:12px;color:#0070c0;">-</div><div class="t" style="left:780px;width:400px;text-align:center;top:479.84px;font-size:12px;line-height:12px;color:#0070c0;">-</div><div class="t" style="left:869px;width:400px;text-align:center;top:479.84px;font-size:12px;line-height:12px;color:#0070c0;">-</div><div class="t" style="left:958px;width:400px;text-align:center;top:479.84px;font-size:12px;line-height:12px;color:#0070c0;">-</div><div class="t" style="left:1047px;width:400px;text-align:center;top:479.84px;font-size:12px;line-height:12px;color:#0070c0;">-</div><div class="t" style="left:1136px;width:400px;text-align:center;top:479.84px;font-size:12px;line-height:12px;color:#0070c0;">-</div><div class="t" style="left:1041px;width:400px;text-align:right;top:479.84px;font-size:12px;line-height:12px;color:#0070c0;">60,000</div><div class="t" style="left:1137px;width:400px;text-align:right;top:479.84px;font-size:12px;line-height:12px;color:#0070c0;">5,000</div><div class="t" style="left:1226px;width:400px;text-align:right;top:479.84px;font-size:12px;line-height:12px;color:#0070c0;">6,000</div><div class="t" style="left:1318.5px;width:400px;text-align:right;top:479.84px;font-size:12px;line-height:12px;color:#0070c0;">(16,000)</div><div class="t" style="left:1404px;width:400px;text-align:right;top:479.84px;font-size:12px;line-height:12px;color:#0070c0;">20,000</div><div class="t" style="left:1493px;width:400px;text-align:right;top:479.84px;font-size:12px;line-height:12px;color:#0070c0;">10,000</div><div class="t" style="left:28px;top:500.84px;font-size:12px;line-height:12px;color:#00b050;transform:scaleX(0.93);transform-origin:left center;">OPV</div><div class="t" style="left:68px;top:500.84px;font-size:12px;line-height:12px;color:#000;transform:scaleX(1.03);transform-origin:left center;">Other Provisions</div><div class="t" style="left:65.5px;width:400px;text-align:right;top:500.84px;font-size:12px;line-height:12px;color:#0070c0;">(42,000)</div><div class="t" style="left:335px;width:400px;text-align:center;top:500.84px;font-size:12px;line-height:12px;color:#0070c0;">-</div><div class="t" style="left:424px;width:400px;text-align:center;top:500.84px;font-size:12px;line-height:12px;color:#0070c0;">-</div><div class="t" style="left:513px;width:400px;text-align:center;top:500.84px;font-size:12px;line-height:12px;color:#0070c0;">-</div><div class="t" style="left:602px;width:400px;text-align:center;top:500.84px;font-size:12px;line-height:12px;color:#0070c0;">-</div><div class="t" style="left:691px;width:400px;text-align:center;top:500.84px;font-size:12px;line-height:12px;color:#0070c0;">-</div><div class="t" style="left:780px;width:400px;text-align:center;top:500.84px;font-size:12px;line-height:12px;color:#0070c0;">-</div><div class="t" style="left:869px;width:400px;text-align:center;top:500.84px;font-size:12px;line-height:12px;color:#0070c0;">-</div><div class="t" style="left:958px;width:400px;text-align:center;top:500.84px;font-size:12px;line-height:12px;color:#0070c0;">-</div><div class="t" style="left:1047px;width:400px;text-align:center;top:500.84px;font-size:12px;line-height:12px;color:#0070c0;">-</div><div class="t" style="left:1136px;width:400px;text-align:center;top:500.84px;font-size:12px;line-height:12px;color:#0070c0;">-</div><div class="t" style="left:1041px;width:400px;text-align:right;top:500.84px;font-size:12px;line-height:12px;color:#0070c0;">30,000</div><div class="t" style="left:1140.5px;width:400px;text-align:right;top:500.84px;font-size:12px;line-height:12px;color:#0070c0;">(12,000)</div><div class="t" style="left:1229.5px;width:400px;text-align:right;top:500.84px;font-size:12px;line-height:12px;color:#0070c0;">(9,000)</div><div class="t" style="left:1315px;width:400px;text-align:right;top:500.84px;font-size:12px;line-height:12px;color:#0070c0;">19,000</div><div class="t" style="left:1404px;width:400px;text-align:right;top:500.84px;font-size:12px;line-height:12px;color:#0070c0;">15,000</div><div class="t" style="left:1493px;width:400px;text-align:right;top:500.84px;font-size:12px;line-height:12px;color:#0070c0;">18,000</div><div class="t" style="left:68px;top:521.84px;font-size:12px;line-height:12px;color:#000;font-style:italic;transform:scaleX(0.99);transform-origin:left center;">Cash generated from operations</div><div class="t" style="left:65.5px;width:400px;text-align:right;top:521.84px;font-size:12px;line-height:12px;color:#000;font-style:italic;">(35,827)</div><div class="t" style="left:151px;width:400px;text-align:right;top:521.84px;font-size:12px;line-height:12px;color:#000;font-style:italic;">86,845</div><div class="t" style="left:240px;width:400px;text-align:right;top:521.84px;font-size:12px;line-height:12px;color:#000;font-style:italic;">71,841</div><div class="t" style="left:329px;width:400px;text-align:right;top:521.84px;font-size:12px;line-height:12px;color:#000;font-style:italic;">64,609</div><div class="t" style="left:418px;width:400px;text-align:right;top:521.84px;font-size:12px;line-height:12px;color:#000;font-style:italic;">45,098</div><div class="t" style="left:507px;width:400px;text-align:right;top:521.84px;font-size:12px;line-height:12px;color:#000;font-style:italic;">112,502</div><div class="t" style="left:596px;width:400px;text-align:right;top:521.84px;font-size:12px;line-height:12px;color:#000;font-style:italic;">53,067</div><div class="t" style="left:685px;width:400px;text-align:right;top:521.84px;font-size:12px;line-height:12px;color:#000;font-style:italic;">99,837</div><div class="t" style="left:774px;width:400px;text-align:right;top:521.84px;font-size:12px;line-height:12px;color:#000;font-style:italic;">25,721</div><div class="t" style="left:863px;width:400px;text-align:right;top:521.84px;font-size:12px;line-height:12px;color:#000;font-style:italic;">177,816</div><div class="t" style="left:955.5px;width:400px;text-align:right;top:521.84px;font-size:12px;line-height:12px;color:#000;font-style:italic;">(8,619)</div><div class="t" style="left:1041px;width:400px;text-align:right;top:521.84px;font-size:12px;line-height:12px;color:#000;font-style:italic;">203,232</div><div class="t" style="left:1137px;width:400px;text-align:right;top:521.84px;font-size:12px;line-height:12px;color:#000;font-style:italic;">896,123</div><div class="t" style="left:1226px;width:400px;text-align:right;top:521.84px;font-size:12px;line-height:12px;color:#000;font-style:italic;">1,116,619</div><div class="t" style="left:1315px;width:400px;text-align:right;top:521.84px;font-size:12px;line-height:12px;color:#000;font-style:italic;">1,360,814</div><div class="t" style="left:1404px;width:400px;text-align:right;top:521.84px;font-size:12px;line-height:12px;color:#000;font-style:italic;">1,586,574</div><div class="t" style="left:1493px;width:400px;text-align:right;top:521.84px;font-size:12px;line-height:12px;color:#000;font-style:italic;">1,805,043</div><div class="t" style="left:28px;top:542.84px;font-size:12px;line-height:12px;color:#00b050;transform:scaleX(0.93);transform-origin:left center;">INT</div><div class="t" style="left:68px;top:542.84px;font-size:12px;line-height:12px;color:#000;transform:scaleX(1.03);transform-origin:left center;">Interest paid</div><div class="t" style="left:65.5px;width:400px;text-align:right;top:542.84px;font-size:12px;line-height:12px;color:#000;">(18,177)</div><div class="t" style="left:154.5px;width:400px;text-align:right;top:542.84px;font-size:12px;line-height:12px;color:#000;">(18,033)</div><div class="t" style="left:243.5px;width:400px;text-align:right;top:542.84px;font-size:12px;line-height:12px;color:#000;">(17,888)</div><div class="t" style="left:332.5px;width:400px;text-align:right;top:542.84px;font-size:12px;line-height:12px;color:#000;">(17,742)</div><div class="t" style="left:421.5px;width:400px;text-align:right;top:542.84px;font-size:12px;line-height:12px;color:#000;">(17,594)</div><div class="t" style="left:510.5px;width:400px;text-align:right;top:542.84px;font-size:12px;line-height:12px;color:#000;">(18,216)</div><div class="t" style="left:599.5px;width:400px;text-align:right;top:542.84px;font-size:12px;line-height:12px;color:#000;">(18,060)</div><div class="t" style="left:688.5px;width:400px;text-align:right;top:542.84px;font-size:12px;line-height:12px;color:#000;">(17,903)</div><div class="t" style="left:777.5px;width:400px;text-align:right;top:542.84px;font-size:12px;line-height:12px;color:#000;">(17,745)</div><div class="t" style="left:866.5px;width:400px;text-align:right;top:542.84px;font-size:12px;line-height:12px;color:#000;">(17,585)</div><div class="t" style="left:955.5px;width:400px;text-align:right;top:542.84px;font-size:12px;line-height:12px;color:#000;">(19,923)</div><div class="t" style="left:1044.5px;width:400px;text-align:right;top:542.84px;font-size:12px;line-height:12px;color:#000;">(19,730)</div><div class="t" style="left:1140.5px;width:400px;text-align:right;top:542.84px;font-size:12px;line-height:12px;color:#000;">(218,597)</div><div class="t" style="left:1229.5px;width:400px;text-align:right;top:542.84px;font-size:12px;line-height:12px;color:#000;">(242,128)</div><div class="t" style="left:1318.5px;width:400px;text-align:right;top:542.84px;font-size:12px;line-height:12px;color:#000;">(240,568)</div><div class="t" style="left:1407.5px;width:400px;text-align:right;top:542.84px;font-size:12px;line-height:12px;color:#000;">(211,453)</div><div class="t" style="left:1493px;width:400px;text-align:right;top:542.84px;font-size:12px;line-height:12px;color:#000;">(196,408</div><div class="t" style="left:28px;top:563.84px;font-size:12px;line-height:12px;color:#00b050;transform:scaleX(0.93);transform-origin:left center;">TAX</div><div class="t" style="left:68px;top:563.84px;font-size:12px;line-height:12px;color:#000;transform:scaleX(1.03);transform-origin:left center;">Taxation paid</div><div class="t" style="left:246px;width:400px;text-align:center;top:563.84px;font-size:12px;line-height:12px;color:#000;">-</div><div class="t" style="left:335px;width:400px;text-align:center;top:563.84px;font-size:12px;line-height:12px;color:#000;">-</div><div class="t" style="left:424px;width:400px;text-align:center;top:563.84px;font-size:12px;line-height:12px;color:#000;">-</div><div class="t" style="left:513px;width:400px;text-align:center;top:563.84px;font-size:12px;line-height:12px;color:#000;">-</div><div class="t" style="left:602px;width:400px;text-align:center;top:563.84px;font-size:12px;line-height:12px;color:#000;">-</div><div class="t" style="left:510.5px;width:400px;text-align:right;top:563.84px;font-size:12px;line-height:12px;color:#000;">(74,648)</div><div class="t" style="left:780px;width:400px;text-align:center;top:563.84px;font-size:12px;line-height:12px;color:#000;">-</div><div class="t" style="left:869px;width:400px;text-align:center;top:563.84px;font-size:12px;line-height:12px;color:#000;">-</div><div class="t" style="left:958px;width:400px;text-align:center;top:563.84px;font-size:12px;line-height:12px;color:#000;">-</div><div class="t" style="left:1047px;width:400px;text-align:center;top:563.84px;font-size:12px;line-height:12px;color:#000;">-</div><div class="t" style="left:1136px;width:400px;text-align:center;top:563.84px;font-size:12px;line-height:12px;color:#000;">-</div><div class="t" style="left:1044.5px;width:400px;text-align:right;top:563.84px;font-size:12px;line-height:12px;color:#000;">(81,714)</div><div class="t" style="left:1140.5px;width:400px;text-align:right;top:563.84px;font-size:12px;line-height:12px;color:#000;">(156,362)</div><div class="t" style="left:1229.5px;width:400px;text-align:right;top:563.84px;font-size:12px;line-height:12px;color:#000;">(184,266)</div><div class="t" style="left:1318.5px;width:400px;text-align:right;top:563.84px;font-size:12px;line-height:12px;color:#000;">(229,967)</div><div class="t" style="left:1407.5px;width:400px;text-align:right;top:563.84px;font-size:12px;line-height:12px;color:#000;">(312,035)</div><div class="t" style="left:1493px;width:400px;text-align:right;top:563.84px;font-size:12px;line-height:12px;color:#000;">(373,569</div><div class="t" style="left:68px;top:583.84px;font-size:12px;line-height:12px;color:#000;font-style:italic;transform:scaleX(0.99);transform-origin:left center;">Net cash from operating activities</div><div class="t" style="left:65.5px;width:400px;text-align:right;top:583.84px;font-size:12px;line-height:12px;color:#000;font-style:italic;">(54,004)</div><div class="t" style="left:151px;width:400px;text-align:right;top:583.84px;font-size:12px;line-height:12px;color:#000;font-style:italic;">68,812</div><div class="t" style="left:240px;width:400px;text-align:right;top:583.84px;font-size:12px;line-height:12px;color:#000;font-style:italic;">53,952</div><div class="t" style="left:329px;width:400px;text-align:right;top:583.84px;font-size:12px;line-height:12px;color:#000;font-style:italic;">46,867</div><div class="t" style="left:418px;width:400px;text-align:right;top:583.84px;font-size:12px;line-height:12px;color:#000;font-style:italic;">27,504</div><div class="t" style="left:507px;width:400px;text-align:right;top:583.84px;font-size:12px;line-height:12px;color:#000;font-style:italic;">19,638</div><div class="t" style="left:596px;width:400px;text-align:right;top:583.84px;font-size:12px;line-height:12px;color:#000;font-style:italic;">35,007</div><div class="t" style="left:685px;width:400px;text-align:right;top:583.84px;font-size:12px;line-height:12px;color:#000;font-style:italic;">81,934</div><div class="t" style="left:774px;width:400px;text-align:right;top:583.84px;font-size:12px;line-height:12px;color:#000;font-style:italic;">7,976</div><div class="t" style="left:863px;width:400px;text-align:right;top:583.84px;font-size:12px;line-height:12px;color:#000;font-style:italic;">160,231</div><div class="t" style="left:955.5px;width:400px;text-align:right;top:583.84px;font-size:12px;line-height:12px;color:#000;font-style:italic;">(28,543)</div><div class="t" style="left:1041px;width:400px;text-align:right;top:583.84px;font-size:12px;line-height:12px;color:#000;font-style:italic;">101,788</div><div class="t" style="left:1137px;width:400px;text-align:right;top:583.84px;font-size:12px;line-height:12px;color:#000;font-style:italic;">521,164</div><div class="t" style="left:1226px;width:400px;text-align:right;top:583.84px;font-size:12px;line-height:12px;color:#000;font-style:italic;">690,225</div><div class="t" style="left:1315px;width:400px;text-align:right;top:583.84px;font-size:12px;line-height:12px;color:#000;font-style:italic;">890,279</div><div class="t" style="left:1404px;width:400px;text-align:right;top:583.84px;font-size:12px;line-height:12px;color:#000;font-style:italic;">1,063,087</div><div class="t" style="left:1493px;width:400px;text-align:right;top:583.84px;font-size:12px;line-height:12px;color:#000;font-style:italic;">1,235,065</div><div class="t" style="left:68px;top:605.84px;font-size:12px;line-height:12px;color:#000;font-weight:bold;transform:scaleX(0.94);transform-origin:left center;">Cash flows from investing activities</div><div class="t" style="left:28px;top:626.84px;font-size:12px;line-height:12px;color:#ff0000;transform:scaleX(0.93);transform-origin:left center;">PPE</div><div class="t" style="left:68px;top:626.84px;font-size:12px;line-height:12px;color:#000;transform:scaleX(1.03);transform-origin:left center;">Purchases of property, plant &amp; equipment</div><div class="t" style="left:246px;width:400px;text-align:center;top:626.84px;font-size:12px;line-height:12px;color:#0070c0;">-</div><div class="t" style="left:335px;width:400px;text-align:center;top:626.84px;font-size:12px;line-height:12px;color:#0070c0;">-</div><div class="t" style="left:424px;width:400px;text-align:center;top:626.84px;font-size:12px;line-height:12px;color:#0070c0;">-</div><div class="t" style="left:513px;width:400px;text-align:center;top:626.84px;font-size:12px;line-height:12px;color:#0070c0;">-</div><div class="t" style="left:602px;width:400px;text-align:center;top:626.84px;font-size:12px;line-height:12px;color:#0070c0;">-</div><div class="t" style="left:691px;width:400px;text-align:center;top:626.84px;font-size:12px;line-height:12px;color:#0070c0;">-</div><div class="t" style="left:780px;width:400px;text-align:center;top:626.84px;font-size:12px;line-height:12px;color:#0070c0;">-</div><div class="t" style="left:869px;width:400px;text-align:center;top:626.84px;font-size:12px;line-height:12px;color:#0070c0;">-</div><div class="t" style="left:958px;width:400px;text-align:center;top:626.84px;font-size:12px;line-height:12px;color:#0070c0;">-</div><div class="t" style="left:1047px;width:400px;text-align:center;top:626.84px;font-size:12px;line-height:12px;color:#0070c0;">-</div><div class="t" style="left:955.5px;width:400px;text-align:right;top:626.84px;font-size:12px;line-height:12px;color:#0070c0;">(240,000)</div><div class="t" style="left:1225px;width:400px;text-align:center;top:626.84px;font-size:12px;line-height:12px;color:#0070c0;">-</div><div class="t" style="left:1140.5px;width:400px;text-align:right;top:626.84px;font-size:12px;line-height:12px;color:#0070c0;">(240,000)</div><div class="t" style="left:1229.5px;width:400px;text-align:right;top:626.84px;font-size:12px;line-height:12px;color:#0070c0;">(300,000)</div><div class="t" style="left:1318.5px;width:400px;text-align:right;top:626.84px;font-size:12px;line-height:12px;color:#0070c0;">(180,000)</div><div class="t" style="left:1407.5px;width:400px;text-align:right;top:626.84px;font-size:12px;line-height:12px;color:#0070c0;">(200,000)</div><div class="t" style="left:1493px;width:400px;text-align:right;top:626.84px;font-size:12px;line-height:12px;color:#0070c0;">(350,000</div><div class="t" style="left:28px;top:647.84px;font-size:12px;line-height:12px;color:#ff0000;transform:scaleX(0.93);transform-origin:left center;">INA</div><div class="t" style="left:68px;top:647.84px;font-size:12px;line-height:12px;color:#000;transform:scaleX(1.03);transform-origin:left center;">Purchases of intangible assets</div><div class="t" style="left:246px;width:400px;text-align:center;top:647.84px;font-size:12px;line-height:12px;color:#0070c0;">-</div><div class="t" style="left:335px;width:400px;text-align:center;top:647.84px;font-size:12px;line-height:12px;color:#0070c0;">-</div><div class="t" style="left:424px;width:400px;text-align:center;top:647.84px;font-size:12px;line-height:12px;color:#0070c0;">-</div><div class="t" style="left:513px;width:400px;text-align:center;top:647.84px;font-size:12px;line-height:12px;color:#0070c0;">-</div><div class="t" style="left:602px;width:400px;text-align:center;top:647.84px;font-size:12px;line-height:12px;color:#0070c0;">-</div><div class="t" style="left:691px;width:400px;text-align:center;top:647.84px;font-size:12px;line-height:12px;color:#0070c0;">-</div><div class="t" style="left:780px;width:400px;text-align:center;top:647.84px;font-size:12px;line-height:12px;color:#0070c0;">-</div><div class="t" style="left:869px;width:400px;text-align:center;top:647.84px;font-size:12px;line-height:12px;color:#0070c0;">-</div><div class="t" style="left:958px;width:400px;text-align:center;top:647.84px;font-size:12px;line-height:12px;color:#0070c0;">-</div><div class="t" style="left:1047px;width:400px;text-align:center;top:647.84px;font-size:12px;line-height:12px;color:#0070c0;">-</div><div class="t" style="left:1136px;width:400px;text-align:center;top:647.84px;font-size:12px;line-height:12px;color:#0070c0;">-</div><div class="t" style="left:1225px;width:400px;text-align:center;top:647.84px;font-size:12px;line-height:12px;color:#0070c0;">-</div><div class="t" style="left:1321px;width:400px;text-align:center;top:647.84px;font-size:12px;line-height:12px;color:#0070c0;">-</div><div class="t" style="left:1410px;width:400px;text-align:center;top:647.84px;font-size:12px;line-height:12px;color:#0070c0;">-</div><div class="t" style="left:1499px;width:400px;text-align:center;top:647.84px;font-size:12px;line-height:12px;color:#0070c0;">-</div><div class="t" style="left:1588px;width:400px;text-align:center;top:647.84px;font-size:12px;line-height:12px;color:#0070c0;">-</div><div class="t" style="left:1677px;width:400px;text-align:center;top:647.84px;font-size:12px;line-height:12px;color:#0070c0;">-</div><div class="t" style="left:28px;top:668.84px;font-size:12px;line-height:12px;color:#ff0000;transform:scaleX(0.93);transform-origin:left center;">INV</div><div class="t" style="left:68px;top:668.84px;font-size:12px;line-height:12px;color:#000;transform:scaleX(1.03);transform-origin:left center;">Purchases of investments</div><div class="t" style="left:246px;width:400px;text-align:center;top:668.84px;font-size:12px;line-height:12px;color:#0070c0;">-</div><div class="t" style="left:335px;width:400px;text-align:center;top:668.84px;font-size:12px;line-height:12px;color:#0070c0;">-</div><div class="t" style="left:424px;width:400px;text-align:center;top:668.84px;font-size:12px;line-height:12px;color:#0070c0;">-</div><div class="t" style="left:513px;width:400px;text-align:center;top:668.84px;font-size:12px;line-height:12px;color:#0070c0;">-</div><div class="t" style="left:602px;width:400px;text-align:center;top:668.84px;font-size:12px;line-height:12px;color:#0070c0;">-</div><div class="t" style="left:691px;width:400px;text-align:center;top:668.84px;font-size:12px;line-height:12px;color:#0070c0;">-</div><div class="t" style="left:780px;width:400px;text-align:center;top:668.84px;font-size:12px;line-height:12px;color:#0070c0;">-</div><div class="t" style="left:869px;width:400px;text-align:center;top:668.84px;font-size:12px;line-height:12px;color:#0070c0;">-</div><div class="t" style="left:958px;width:400px;text-align:center;top:668.84px;font-size:12px;line-height:12px;color:#0070c0;">-</div><div class="t" style="left:1047px;width:400px;text-align:center;top:668.84px;font-size:12px;line-height:12px;color:#0070c0;">-</div><div class="t" style="left:1136px;width:400px;text-align:center;top:668.84px;font-size:12px;line-height:12px;color:#0070c0;">-</div><div class="t" style="left:1225px;width:400px;text-align:center;top:668.84px;font-size:12px;line-height:12px;color:#0070c0;">-</div><div class="t" style="left:1321px;width:400px;text-align:center;top:668.84px;font-size:12px;line-height:12px;color:#0070c0;">-</div><div class="t" style="left:1229.5px;width:400px;text-align:right;top:668.84px;font-size:12px;line-height:12px;color:#0070c0;">(400,000)</div><div class="t" style="left:1318.5px;width:400px;text-align:right;top:668.84px;font-size:12px;line-height:12px;color:#0070c0;">(600,000)</div><div class="t" style="left:1407.5px;width:400px;text-align:right;top:668.84px;font-size:12px;line-height:12px;color:#0070c0;">(500,000)</div><div class="t" style="left:1493px;width:400px;text-align:right;top:668.84px;font-size:12px;line-height:12px;color:#0070c0;">(400,000</div><div class="t" style="left:68px;top:688.84px;font-size:12px;line-height:12px;color:#000;font-style:italic;transform:scaleX(0.99);transform-origin:left center;">Net cash used in investing activities</div><div class="t" style="left:246px;width:400px;text-align:center;top:688.84px;font-size:12px;line-height:12px;color:#000;font-style:italic;">-</div><div class="t" style="left:335px;width:400px;text-align:center;top:688.84px;font-size:12px;line-height:12px;color:#000;font-style:italic;">-</div><div class="t" style="left:424px;width:400px;text-align:center;top:688.84px;font-size:12px;line-height:12px;color:#000;font-style:italic;">-</div><div class="t" style="left:513px;width:400px;text-align:center;top:688.84px;font-size:12px;line-height:12px;color:#000;font-style:italic;">-</div><div class="t" style="left:602px;width:400px;text-align:center;top:688.84px;font-size:12px;line-height:12px;color:#000;font-style:italic;">-</div><div class="t" style="left:691px;width:400px;text-align:center;top:688.84px;font-size:12px;line-height:12px;color:#000;font-style:italic;">-</div><div class="t" style="left:780px;width:400px;text-align:center;top:688.84px;font-size:12px;line-height:12px;color:#000;font-style:italic;">-</div><div class="t" style="left:869px;width:400px;text-align:center;top:688.84px;font-size:12px;line-height:12px;color:#000;font-style:italic;">-</div><div class="t" style="left:958px;width:400px;text-align:center;top:688.84px;font-size:12px;line-height:12px;color:#000;font-style:italic;">-</div><div class="t" style="left:1047px;width:400px;text-align:center;top:688.84px;font-size:12px;line-height:12px;color:#000;font-style:italic;">-</div><div class="t" style="left:955.5px;width:400px;text-align:right;top:688.84px;font-size:12px;line-height:12px;color:#000;font-style:italic;">(240,000)</div><div class="t" style="left:1225px;width:400px;text-align:center;top:688.84px;font-size:12px;line-height:12px;color:#000;font-style:italic;">-</div><div class="t" style="left:1140.5px;width:400px;text-align:right;top:688.84px;font-size:12px;line-height:12px;color:#000;font-style:italic;">(240,000)</div><div class="t" style="left:1229.5px;width:400px;text-align:right;top:688.84px;font-size:12px;line-height:12px;color:#000;font-style:italic;">(700,000)</div><div class="t" style="left:1318.5px;width:400px;text-align:right;top:688.84px;font-size:12px;line-height:12px;color:#000;font-style:italic;">(780,000)</div><div class="t" style="left:1407.5px;width:400px;text-align:right;top:688.84px;font-size:12px;line-height:12px;color:#000;font-style:italic;">(700,000)</div><div class="t" style="left:1493px;width:400px;text-align:right;top:688.84px;font-size:12px;line-height:12px;color:#000;font-style:italic;">(750,000</div><div class="t" style="left:68px;top:710.84px;font-size:12px;line-height:12px;color:#000;font-weight:bold;transform:scaleX(0.94);transform-origin:left center;">Cash flows from financing activities</div><div class="t" style="left:28px;top:731.84px;font-size:12px;line-height:12px;color:#00b050;transform:scaleX(0.93);transform-origin:left center;">CAP</div><div class="t" style="left:68px;top:731.84px;font-size:12px;line-height:12px;color:#000;transform:scaleX(1.03);transform-origin:left center;">Proceeds from shareholders&#x27; contributions</div><div class="t" style="left:246px;width:400px;text-align:center;top:731.84px;font-size:12px;line-height:12px;color:#0070c0;">-</div><div class="t" style="left:335px;width:400px;text-align:center;top:731.84px;font-size:12px;line-height:12px;color:#0070c0;">-</div><div class="t" style="left:424px;width:400px;text-align:center;top:731.84px;font-size:12px;line-height:12px;color:#0070c0;">-</div><div class="t" style="left:513px;width:400px;text-align:center;top:731.84px;font-size:12px;line-height:12px;color:#0070c0;">-</div><div class="t" style="left:602px;width:400px;text-align:center;top:731.84px;font-size:12px;line-height:12px;color:#0070c0;">-</div><div class="t" style="left:691px;width:400px;text-align:center;top:731.84px;font-size:12px;line-height:12px;color:#0070c0;">-</div><div class="t" style="left:780px;width:400px;text-align:center;top:731.84px;font-size:12px;line-height:12px;color:#0070c0;">-</div><div class="t" style="left:869px;width:400px;text-align:center;top:731.84px;font-size:12px;line-height:12px;color:#0070c0;">-</div><div class="t" style="left:958px;width:400px;text-align:center;top:731.84px;font-size:12px;line-height:12px;color:#0070c0;">-</div><div class="t" style="left:1047px;width:400px;text-align:center;top:731.84px;font-size:12px;line-height:12px;color:#0070c0;">-</div><div class="t" style="left:1136px;width:400px;text-align:center;top:731.84px;font-size:12px;line-height:12px;color:#0070c0;">-</div><div class="t" style="left:1225px;width:400px;text-align:center;top:731.84px;font-size:12px;line-height:12px;color:#0070c0;">-</div><div class="t" style="left:1321px;width:400px;text-align:center;top:731.84px;font-size:12px;line-height:12px;color:#0070c0;">-</div><div class="t" style="left:1410px;width:400px;text-align:center;top:731.84px;font-size:12px;line-height:12px;color:#0070c0;">-</div><div class="t" style="left:1499px;width:400px;text-align:center;top:731.84px;font-size:12px;line-height:12px;color:#0070c0;">-</div><div class="t" style="left:1588px;width:400px;text-align:center;top:731.84px;font-size:12px;line-height:12px;color:#0070c0;">-</div><div class="t" style="left:1677px;width:400px;text-align:center;top:731.84px;font-size:12px;line-height:12px;color:#0070c0;">-</div><div class="t" style="left:28px;top:752.84px;font-size:12px;line-height:12px;color:#00b050;transform:scaleX(0.93);transform-origin:left center;">DIV</div><div class="t" style="left:68px;top:752.84px;font-size:12px;line-height:12px;color:#000;transform:scaleX(1.03);transform-origin:left center;">Dividends paid</div><div class="t" style="left:246px;width:400px;text-align:center;top:752.84px;font-size:12px;line-height:12px;color:#000;">-</div><div class="t" style="left:335px;width:400px;text-align:center;top:752.84px;font-size:12px;line-height:12px;color:#000;">-</div><div class="t" style="left:424px;width:400px;text-align:center;top:752.84px;font-size:12px;line-height:12px;color:#000;">-</div><div class="t" style="left:513px;width:400px;text-align:center;top:752.84px;font-size:12px;line-height:12px;color:#000;">-</div><div class="t" style="left:602px;width:400px;text-align:center;top:752.84px;font-size:12px;line-height:12px;color:#000;">-</div><div class="t" style="left:691px;width:400px;text-align:center;top:752.84px;font-size:12px;line-height:12px;color:#000;">-</div><div class="t" style="left:780px;width:400px;text-align:center;top:752.84px;font-size:12px;line-height:12px;color:#000;">-</div><div class="t" style="left:869px;width:400px;text-align:center;top:752.84px;font-size:12px;line-height:12px;color:#000;">-</div><div class="t" style="left:958px;width:400px;text-align:center;top:752.84px;font-size:12px;line-height:12px;color:#000;">-</div><div class="t" style="left:1047px;width:400px;text-align:center;top:752.84px;font-size:12px;line-height:12px;color:#000;">-</div><div class="t" style="left:1136px;width:400px;text-align:center;top:752.84px;font-size:12px;line-height:12px;color:#000;">-</div><div class="t" style="left:1225px;width:400px;text-align:center;top:752.84px;font-size:12px;line-height:12px;color:#000;">-</div><div class="t" style="left:1321px;width:400px;text-align:center;top:752.84px;font-size:12px;line-height:12px;color:#000;">-</div><div class="t" style="left:1410px;width:400px;text-align:center;top:752.84px;font-size:12px;line-height:12px;color:#000;">-</div><div class="t" style="left:1499px;width:400px;text-align:center;top:752.84px;font-size:12px;line-height:12px;color:#000;">-</div><div class="t" style="left:1588px;width:400px;text-align:center;top:752.84px;font-size:12px;line-height:12px;color:#000;">-</div><div class="t" style="left:1677px;width:400px;text-align:center;top:752.84px;font-size:12px;line-height:12px;color:#000;">-</div><div class="t" style="left:28px;top:773.84px;font-size:12px;line-height:12px;color:#00b050;transform:scaleX(0.93);transform-origin:left center;">LT1</div><div class="t" style="left:68px;top:773.84px;font-size:12px;line-height:12px;color:#000;transform:scaleX(1.03);transform-origin:left center;">Proceeds from loans 1</div><div class="t" style="left:246px;width:400px;text-align:center;top:773.84px;font-size:12px;line-height:12px;color:#000;">-</div><div class="t" style="left:335px;width:400px;text-align:center;top:773.84px;font-size:12px;line-height:12px;color:#000;">-</div><div class="t" style="left:424px;width:400px;text-align:center;top:773.84px;font-size:12px;line-height:12px;color:#000;">-</div><div class="t" style="left:513px;width:400px;text-align:center;top:773.84px;font-size:12px;line-height:12px;color:#000;">-</div><div class="t" style="left:602px;width:400px;text-align:center;top:773.84px;font-size:12px;line-height:12px;color:#000;">-</div><div class="t" style="left:691px;width:400px;text-align:center;top:773.84px;font-size:12px;line-height:12px;color:#000;">-</div><div class="t" style="left:780px;width:400px;text-align:center;top:773.84px;font-size:12px;line-height:12px;color:#000;">-</div><div class="t" style="left:869px;width:400px;text-align:center;top:773.84px;font-size:12px;line-height:12px;color:#000;">-</div><div class="t" style="left:958px;width:400px;text-align:center;top:773.84px;font-size:12px;line-height:12px;color:#000;">-</div><div class="t" style="left:1047px;width:400px;text-align:center;top:773.84px;font-size:12px;line-height:12px;color:#000;">-</div><div class="t" style="left:1136px;width:400px;text-align:center;top:773.84px;font-size:12px;line-height:12px;color:#000;">-</div><div class="t" style="left:1225px;width:400px;text-align:center;top:773.84px;font-size:12px;line-height:12px;color:#000;">-</div><div class="t" style="left:1321px;width:400px;text-align:center;top:773.84px;font-size:12px;line-height:12px;color:#000;">-</div><div class="t" style="left:1410px;width:400px;text-align:center;top:773.84px;font-size:12px;line-height:12px;color:#000;">-</div><div class="t" style="left:1499px;width:400px;text-align:center;top:773.84px;font-size:12px;line-height:12px;color:#000;">-</div><div class="t" style="left:1588px;width:400px;text-align:center;top:773.84px;font-size:12px;line-height:12px;color:#000;">-</div><div class="t" style="left:1677px;width:400px;text-align:center;top:773.84px;font-size:12px;line-height:12px;color:#000;">-</div><div class="t" style="left:28px;top:794.84px;font-size:12px;line-height:12px;color:#00b050;transform:scaleX(0.93);transform-origin:left center;">LT2</div><div class="t" style="left:68px;top:794.84px;font-size:12px;line-height:12px;color:#000;transform:scaleX(1.03);transform-origin:left center;">Proceeds from loans 2</div><div class="t" style="left:246px;width:400px;text-align:center;top:794.84px;font-size:12px;line-height:12px;color:#000;">-</div><div class="t" style="left:335px;width:400px;text-align:center;top:794.84px;font-size:12px;line-height:12px;color:#000;">-</div><div class="t" style="left:424px;width:400px;text-align:center;top:794.84px;font-size:12px;line-height:12px;color:#000;">-</div><div class="t" style="left:513px;width:400px;text-align:center;top:794.84px;font-size:12px;line-height:12px;color:#000;">-</div><div class="t" style="left:602px;width:400px;text-align:center;top:794.84px;font-size:12px;line-height:12px;color:#000;">-</div><div class="t" style="left:507px;width:400px;text-align:right;top:794.84px;font-size:12px;line-height:12px;color:#000;">100,000</div><div class="t" style="left:780px;width:400px;text-align:center;top:794.84px;font-size:12px;line-height:12px;color:#000;">-</div><div class="t" style="left:869px;width:400px;text-align:center;top:794.84px;font-size:12px;line-height:12px;color:#000;">-</div><div class="t" style="left:958px;width:400px;text-align:center;top:794.84px;font-size:12px;line-height:12px;color:#000;">-</div><div class="t" style="left:1047px;width:400px;text-align:center;top:794.84px;font-size:12px;line-height:12px;color:#000;">-</div><div class="t" style="left:1136px;width:400px;text-align:center;top:794.84px;font-size:12px;line-height:12px;color:#000;">-</div><div class="t" style="left:1225px;width:400px;text-align:center;top:794.84px;font-size:12px;line-height:12px;color:#000;">-</div><div class="t" style="left:1137px;width:400px;text-align:right;top:794.84px;font-size:12px;line-height:12px;color:#000;">100,000</div><div class="t" style="left:1410px;width:400px;text-align:center;top:794.84px;font-size:12px;line-height:12px;color:#000;">-</div><div class="t" style="left:1499px;width:400px;text-align:center;top:794.84px;font-size:12px;line-height:12px;color:#000;">-</div><div class="t" style="left:1588px;width:400px;text-align:center;top:794.84px;font-size:12px;line-height:12px;color:#000;">-</div><div class="t" style="left:1677px;width:400px;text-align:center;top:794.84px;font-size:12px;line-height:12px;color:#000;">-</div><div class="t" style="left:28px;top:815.84px;font-size:12px;line-height:12px;color:#00b050;transform:scaleX(0.93);transform-origin:left center;">LT3</div><div class="t" style="left:68px;top:815.84px;font-size:12px;line-height:12px;color:#000;transform:scaleX(1.03);transform-origin:left center;">Proceeds from loans 3</div><div class="t" style="left:246px;width:400px;text-align:center;top:815.84px;font-size:12px;line-height:12px;color:#000;">-</div><div class="t" style="left:335px;width:400px;text-align:center;top:815.84px;font-size:12px;line-height:12px;color:#000;">-</div><div class="t" style="left:424px;width:400px;text-align:center;top:815.84px;font-size:12px;line-height:12px;color:#000;">-</div><div class="t" style="left:513px;width:400px;text-align:center;top:815.84px;font-size:12px;line-height:12px;color:#000;">-</div><div class="t" style="left:602px;width:400px;text-align:center;top:815.84px;font-size:12px;line-height:12px;color:#000;">-</div><div class="t" style="left:691px;width:400px;text-align:center;top:815.84px;font-size:12px;line-height:12px;color:#000;">-</div><div class="t" style="left:780px;width:400px;text-align:center;top:815.84px;font-size:12px;line-height:12px;color:#000;">-</div><div class="t" style="left:869px;width:400px;text-align:center;top:815.84px;font-size:12px;line-height:12px;color:#000;">-</div><div class="t" style="left:958px;width:400px;text-align:center;top:815.84px;font-size:12px;line-height:12px;color:#000;">-</div><div class="t" style="left:1047px;width:400px;text-align:center;top:815.84px;font-size:12px;line-height:12px;color:#000;">-</div><div class="t" style="left:952px;width:400px;text-align:right;top:815.84px;font-size:12px;line-height:12px;color:#000;">240,000</div><div class="t" style="left:1225px;width:400px;text-align:center;top:815.84px;font-size:12px;line-height:12px;color:#000;">-</div><div class="t" style="left:1137px;width:400px;text-align:right;top:815.84px;font-size:12px;line-height:12px;color:#000;">240,000</div><div class="t" style="left:1226px;width:400px;text-align:right;top:815.84px;font-size:12px;line-height:12px;color:#000;">300,000</div><div class="t" style="left:1315px;width:400px;text-align:right;top:815.84px;font-size:12px;line-height:12px;color:#000;">180,000</div><div class="t" style="left:1404px;width:400px;text-align:right;top:815.84px;font-size:12px;line-height:12px;color:#000;">200,000</div><div class="t" style="left:1493px;width:400px;text-align:right;top:815.84px;font-size:12px;line-height:12px;color:#000;">350,000</div><div class="t" style="left:28px;top:836.84px;font-size:12px;line-height:12px;color:#00b050;transform:scaleX(0.93);transform-origin:left center;">FIN</div><div class="t" style="left:68px;top:836.84px;font-size:12px;line-height:12px;color:#000;transform:scaleX(1.03);transform-origin:left center;">Proceeds from finance leases</div><div class="t" style="left:246px;width:400px;text-align:center;top:836.84px;font-size:12px;line-height:12px;color:#000;">-</div><div class="t" style="left:335px;width:400px;text-align:center;top:836.84px;font-size:12px;line-height:12px;color:#000;">-</div><div class="t" style="left:424px;width:400px;text-align:center;top:836.84px;font-size:12px;line-height:12px;color:#000;">-</div><div class="t" style="left:513px;width:400px;text-align:center;top:836.84px;font-size:12px;line-height:12px;color:#000;">-</div><div class="t" style="left:602px;width:400px;text-align:center;top:836.84px;font-size:12px;line-height:12px;color:#000;">-</div><div class="t" style="left:691px;width:400px;text-align:center;top:836.84px;font-size:12px;line-height:12px;color:#000;">-</div><div class="t" style="left:780px;width:400px;text-align:center;top:836.84px;font-size:12px;line-height:12px;color:#000;">-</div><div class="t" style="left:869px;width:400px;text-align:center;top:836.84px;font-size:12px;line-height:12px;color:#000;">-</div><div class="t" style="left:958px;width:400px;text-align:center;top:836.84px;font-size:12px;line-height:12px;color:#000;">-</div><div class="t" style="left:1047px;width:400px;text-align:center;top:836.84px;font-size:12px;line-height:12px;color:#000;">-</div><div class="t" style="left:1136px;width:400px;text-align:center;top:836.84px;font-size:12px;line-height:12px;color:#000;">-</div><div class="t" style="left:1225px;width:400px;text-align:center;top:836.84px;font-size:12px;line-height:12px;color:#000;">-</div><div class="t" style="left:1321px;width:400px;text-align:center;top:836.84px;font-size:12px;line-height:12px;color:#000;">-</div><div class="t" style="left:1410px;width:400px;text-align:center;top:836.84px;font-size:12px;line-height:12px;color:#000;">-</div><div class="t" style="left:1499px;width:400px;text-align:center;top:836.84px;font-size:12px;line-height:12px;color:#000;">-</div><div class="t" style="left:1588px;width:400px;text-align:center;top:836.84px;font-size:12px;line-height:12px;color:#000;">-</div><div class="t" style="left:1677px;width:400px;text-align:center;top:836.84px;font-size:12px;line-height:12px;color:#000;">-</div><div class="t" style="left:28px;top:857.84px;font-size:12px;line-height:12px;color:#00b050;transform:scaleX(0.93);transform-origin:left center;">LT1</div><div class="t" style="left:68px;top:857.84px;font-size:12px;line-height:12px;color:#000;transform:scaleX(1.03);transform-origin:left center;">Repayment of loans 1</div><div class="t" style="left:65.5px;width:400px;text-align:right;top:857.84px;font-size:12px;line-height:12px;color:#000;">(5,775)</div><div class="t" style="left:154.5px;width:400px;text-align:right;top:857.84px;font-size:12px;line-height:12px;color:#000;">(5,824)</div><div class="t" style="left:243.5px;width:400px;text-align:right;top:857.84px;font-size:12px;line-height:12px;color:#000;">(5,874)</div><div class="t" style="left:332.5px;width:400px;text-align:right;top:857.84px;font-size:12px;line-height:12px;color:#000;">(5,924)</div><div class="t" style="left:421.5px;width:400px;text-align:right;top:857.84px;font-size:12px;line-height:12px;color:#000;">(5,975)</div><div class="t" style="left:510.5px;width:400px;text-align:right;top:857.84px;font-size:12px;line-height:12px;color:#000;">(6,026)</div><div class="t" style="left:599.5px;width:400px;text-align:right;top:857.84px;font-size:12px;line-height:12px;color:#000;">(6,077)</div><div class="t" style="left:688.5px;width:400px;text-align:right;top:857.84px;font-size:12px;line-height:12px;color:#000;">(6,129)</div><div class="t" style="left:777.5px;width:400px;text-align:right;top:857.84px;font-size:12px;line-height:12px;color:#000;">(6,181)</div><div class="t" style="left:866.5px;width:400px;text-align:right;top:857.84px;font-size:12px;line-height:12px;color:#000;">(6,234)</div><div class="t" style="left:955.5px;width:400px;text-align:right;top:857.84px;font-size:12px;line-height:12px;color:#000;">(6,287)</div><div class="t" style="left:1044.5px;width:400px;text-align:right;top:857.84px;font-size:12px;line-height:12px;color:#000;">(6,341)</div><div class="t" style="left:1140.5px;width:400px;text-align:right;top:857.84px;font-size:12px;line-height:12px;color:#000;">(72,646)</div><div class="t" style="left:1229.5px;width:400px;text-align:right;top:857.84px;font-size:12px;line-height:12px;color:#000;">(80,452)</div><div class="t" style="left:1318.5px;width:400px;text-align:right;top:857.84px;font-size:12px;line-height:12px;color:#000;">(89,097)</div><div class="t" style="left:1407.5px;width:400px;text-align:right;top:857.84px;font-size:12px;line-height:12px;color:#000;">(98,671)</div><div class="t" style="left:1493px;width:400px;text-align:right;top:857.84px;font-size:12px;line-height:12px;color:#000;">(109,274</div><div class="t" style="left:28px;top:878.84px;font-size:12px;line-height:12px;color:#00b050;transform:scaleX(0.93);transform-origin:left center;">LT2</div><div class="t" style="left:68px;top:878.84px;font-size:12px;line-height:12px;color:#000;transform:scaleX(1.03);transform-origin:left center;">Repayment of loans 2</div><div class="t" style="left:65.5px;width:400px;text-align:right;top:878.84px;font-size:12px;line-height:12px;color:#000;">(3,536)</div><div class="t" style="left:154.5px;width:400px;text-align:right;top:878.84px;font-size:12px;line-height:12px;color:#000;">(3,563)</div><div class="t" style="left:243.5px;width:400px;text-align:right;top:878.84px;font-size:12px;line-height:12px;color:#000;">(3,591)</div><div class="t" style="left:332.5px;width:400px;text-align:right;top:878.84px;font-size:12px;line-height:12px;color:#000;">(3,618)</div><div class="t" style="left:421.5px;width:400px;text-align:right;top:878.84px;font-size:12px;line-height:12px;color:#000;">(3,646)</div><div class="t" style="left:510.5px;width:400px;text-align:right;top:878.84px;font-size:12px;line-height:12px;color:#000;">(4,382)</div><div class="t" style="left:599.5px;width:400px;text-align:right;top:878.84px;font-size:12px;line-height:12px;color:#000;">(4,415)</div><div class="t" style="left:688.5px;width:400px;text-align:right;top:878.84px;font-size:12px;line-height:12px;color:#000;">(4,449)</div><div class="t" style="left:777.5px;width:400px;text-align:right;top:878.84px;font-size:12px;line-height:12px;color:#000;">(4,484)</div><div class="t" style="left:866.5px;width:400px;text-align:right;top:878.84px;font-size:12px;line-height:12px;color:#000;">(4,518)</div><div class="t" style="left:955.5px;width:400px;text-align:right;top:878.84px;font-size:12px;line-height:12px;color:#000;">(4,553)</div><div class="t" style="left:1044.5px;width:400px;text-align:right;top:878.84px;font-size:12px;line-height:12px;color:#000;">(4,588)</div><div class="t" style="left:1140.5px;width:400px;text-align:right;top:878.84px;font-size:12px;line-height:12px;color:#000;">(49,344)</div><div class="t" style="left:1229.5px;width:400px;text-align:right;top:878.84px;font-size:12px;line-height:12px;color:#000;">(57,896)</div><div class="t" style="left:1318.5px;width:400px;text-align:right;top:878.84px;font-size:12px;line-height:12px;color:#000;">(63,484)</div><div class="t" style="left:1407.5px;width:400px;text-align:right;top:878.84px;font-size:12px;line-height:12px;color:#000;">(69,612)</div><div class="t" style="left:1493px;width:400px;text-align:right;top:878.84px;font-size:12px;line-height:12px;color:#000;">(76,331</div><div class="t" style="left:28px;top:899.84px;font-size:12px;line-height:12px;color:#00b050;transform:scaleX(0.93);transform-origin:left center;">LT3</div><div class="t" style="left:68px;top:899.84px;font-size:12px;line-height:12px;color:#000;transform:scaleX(1.03);transform-origin:left center;">Repayment of loans 3</div><div class="t" style="left:246px;width:400px;text-align:center;top:899.84px;font-size:12px;line-height:12px;color:#000;">-</div><div class="t" style="left:335px;width:400px;text-align:center;top:899.84px;font-size:12px;line-height:12px;color:#000;">-</div><div class="t" style="left:424px;width:400px;text-align:center;top:899.84px;font-size:12px;line-height:12px;color:#000;">-</div><div class="t" style="left:513px;width:400px;text-align:center;top:899.84px;font-size:12px;line-height:12px;color:#000;">-</div><div class="t" style="left:602px;width:400px;text-align:center;top:899.84px;font-size:12px;line-height:12px;color:#000;">-</div><div class="t" style="left:691px;width:400px;text-align:center;top:899.84px;font-size:12px;line-height:12px;color:#000;">-</div><div class="t" style="left:780px;width:400px;text-align:center;top:899.84px;font-size:12px;line-height:12px;color:#000;">-</div><div class="t" style="left:869px;width:400px;text-align:center;top:899.84px;font-size:12px;line-height:12px;color:#000;">-</div><div class="t" style="left:958px;width:400px;text-align:center;top:899.84px;font-size:12px;line-height:12px;color:#000;">-</div><div class="t" style="left:1047px;width:400px;text-align:center;top:899.84px;font-size:12px;line-height:12px;color:#000;">-</div><div class="t" style="left:955.5px;width:400px;text-align:right;top:899.84px;font-size:12px;line-height:12px;color:#000;">(2,000)</div><div class="t" style="left:1044.5px;width:400px;text-align:right;top:899.84px;font-size:12px;line-height:12px;color:#000;">(2,030)</div><div class="t" style="left:1140.5px;width:400px;text-align:right;top:899.84px;font-size:12px;line-height:12px;color:#000;">(5,820)</div><div class="t" style="left:1229.5px;width:400px;text-align:right;top:899.84px;font-size:12px;line-height:12px;color:#000;">(63,808)</div><div class="t" style="left:1318.5px;width:400px;text-align:right;top:899.84px;font-size:12px;line-height:12px;color:#000;">(117,350)</div><div class="t" style="left:1407.5px;width:400px;text-align:right;top:899.84px;font-size:12px;line-height:12px;color:#000;">(152,788)</div><div class="t" style="left:1493px;width:400px;text-align:right;top:899.84px;font-size:12px;line-height:12px;color:#000;">(212,324</div><svg style="left:1448px;top:515px" width="7" height="7"><polygon points="0,0 7,0 0,7" fill="#1e8c3c"/></svg><svg style="left:1448px;top:536px" width="7" height="7"><polygon points="0,0 7,0 0,7" fill="#1e8c3c"/></svg></div><div style="left:379px;top:22px;width:1px;height:884px;background:#a6a6a6;"></div><div style="left:0px;top:136px;width:1894px;height:1px;background:#a6a6a6;"></div><div style="left:0px;top:0px;width:1894px;height:22px;background:#e6e6e6;"></div><div style="left:0px;top:22px;width:1895px;height:1px;background:#a6a6a6;"></div><div style="left:25px;top:6px;width:40px;height:16px;background:#d2d2d2;"></div><svg style="left:13px;top:10px" width="10" height="10"><polygon points="9,0 9,9 0,9" fill="#bdbdbd"/></svg><div style="left:25px;top:6px;width:1px;height:16px;background:#c8c8c8;"></div><div style="left:65px;top:6px;width:1px;height:16px;background:#c8c8c8;"></div><div style="left:379px;top:6px;width:1px;height:16px;background:#c8c8c8;"></div><div style="left:468px;top:6px;width:1px;height:16px;background:#c8c8c8;"></div><div style="left:557px;top:6px;width:1px;height:16px;background:#c8c8c8;"></div><div style="left:646px;top:6px;width:1px;height:16px;background:#c8c8c8;"></div><div style="left:735px;top:6px;width:1px;height:16px;background:#c8c8c8;"></div><div style="left:824px;top:6px;width:1px;height:16px;background:#c8c8c8;"></div><div style="left:913px;top:6px;width:1px;height:16px;background:#c8c8c8;"></div><div style="left:1002px;top:6px;width:1px;height:16px;background:#c8c8c8;"></div><div style="left:1091px;top:6px;width:1px;height:16px;background:#c8c8c8;"></div><div style="left:1180px;top:6px;width:1px;height:16px;background:#c8c8c8;"></div><div style="left:1269px;top:6px;width:1px;height:16px;background:#c8c8c8;"></div><div style="left:1358px;top:6px;width:1px;height:16px;background:#c8c8c8;"></div><div style="left:1447px;top:6px;width:1px;height:16px;background:#c8c8c8;"></div><div style="left:1543px;top:6px;width:1px;height:16px;background:#c8c8c8;"></div><div style="left:1632px;top:6px;width:1px;height:16px;background:#c8c8c8;"></div><div style="left:1721px;top:6px;width:1px;height:16px;background:#c8c8c8;"></div><div style="left:1810px;top:6px;width:1px;height:16px;background:#c8c8c8;"></div><div class="t" style="left:-154.0px;width:400px;text-align:center;top:9.69px;font-size:11px;line-height:11px;color:#217346;">A</div><div class="t" style="left:23.0px;width:400px;text-align:center;top:9.69px;font-size:11px;line-height:11px;color:#000;">B</div><div class="t" style="left:224.5px;width:400px;text-align:center;top:9.69px;font-size:11px;line-height:11px;color:#000;">C</div><div class="t" style="left:313.5px;width:400px;text-align:center;top:9.69px;font-size:11px;line-height:11px;color:#000;">D</div><div class="t" style="left:402.5px;width:400px;text-align:center;top:9.69px;font-size:11px;line-height:11px;color:#000;">E</div><div class="t" style="left:491.5px;width:400px;text-align:center;top:9.69px;font-size:11px;line-height:11px;color:#000;">F</div><div class="t" style="left:580.5px;width:400px;text-align:center;top:9.69px;font-size:11px;line-height:11px;color:#000;">G</div><div class="t" style="left:669.5px;width:400px;text-align:center;top:9.69px;font-size:11px;line-height:11px;color:#000;">H</div><div class="t" style="left:758.5px;width:400px;text-align:center;top:9.69px;font-size:11px;line-height:11px;color:#000;">I</div><div class="t" style="left:847.5px;width:400px;text-align:center;top:9.69px;font-size:11px;line-height:11px;color:#000;">J</div><div class="t" style="left:936.5px;width:400px;text-align:center;top:9.69px;font-size:11px;line-height:11px;color:#000;">K</div><div class="t" style="left:1025.5px;width:400px;text-align:center;top:9.69px;font-size:11px;line-height:11px;color:#000;">L</div><div class="t" style="left:1114.5px;width:400px;text-align:center;top:9.69px;font-size:11px;line-height:11px;color:#000;">M</div><div class="t" style="left:1203.5px;width:400px;text-align:center;top:9.69px;font-size:11px;line-height:11px;color:#000;">N</div><div class="t" style="left:1296.0px;width:400px;text-align:center;top:9.69px;font-size:11px;line-height:11px;color:#000;">O</div><div class="t" style="left:1388.5px;width:400px;text-align:center;top:9.69px;font-size:11px;line-height:11px;color:#000;">P</div><div class="t" style="left:1477.5px;width:400px;text-align:center;top:9.69px;font-size:11px;line-height:11px;color:#000;">Q</div><div class="t" style="left:1566.5px;width:400px;text-align:center;top:9.69px;font-size:11px;line-height:11px;color:#000;">R</div><div class="t" style="left:1655.5px;width:400px;text-align:center;top:9.69px;font-size:11px;line-height:11px;color:#000;">S</div><div style="left:0px;top:23px;width:25px;height:883px;background:#e6e6e6;"></div><div style="left:0px;top:23px;width:25px;height:42px;background:#d2d2d2;"></div><div style="left:25px;top:23px;width:1px;height:883px;background:#a6a6a6;"></div><div style="left:0px;top:65px;width:25px;height:1px;background:#c8c8c8;"></div><div style="left:0px;top:91px;width:25px;height:1px;background:#c8c8c8;"></div><div style="left:0px;top:112px;width:25px;height:1px;background:#c8c8c8;"></div><div style="left:0px;top:136px;width:25px;height:1px;background:#c8c8c8;"></div><div style="left:0px;top:157px;width:25px;height:1px;background:#c8c8c8;"></div><div style="left:0px;top:178px;width:25px;height:1px;background:#c8c8c8;"></div><div style="left:0px;top:199px;width:25px;height:1px;background:#c8c8c8;"></div><div style="left:0px;top:220px;width:25px;height:1px;background:#c8c8c8;"></div><div style="left:0px;top:241px;width:25px;height:1px;background:#c8c8c8;"></div><div style="left:0px;top:262px;width:25px;height:1px;background:#c8c8c8;"></div><div style="left:0px;top:283px;width:25px;height:1px;background:#c8c8c8;"></div><div style="left:0px;top:304px;width:25px;height:1px;background:#c8c8c8;"></div><div style="left:0px;top:325px;width:25px;height:1px;background:#c8c8c8;"></div><div style="left:0px;top:346px;width:25px;height:1px;background:#c8c8c8;"></div><div style="left:0px;top:367px;width:25px;height:1px;background:#c8c8c8;"></div><div style="left:0px;top:388px;width:25px;height:1px;background:#c8c8c8;"></div><div style="left:0px;top:409px;width:25px;height:1px;background:#c8c8c8;"></div><div style="left:0px;top:430px;width:25px;height:1px;background:#c8c8c8;"></div><div style="left:0px;top:451px;width:25px;height:1px;background:#c8c8c8;"></div><div style="left:0px;top:472px;width:25px;height:1px;background:#c8c8c8;"></div><div style="left:0px;top:493px;width:25px;height:1px;background:#c8c8c8;"></div><div style="left:0px;top:514px;width:25px;height:1px;background:#c8c8c8;"></div><div style="left:0px;top:535px;width:25px;height:1px;background:#c8c8c8;"></div><div style="left:0px;top:556px;width:25px;height:1px;background:#c8c8c8;"></div><div style="left:0px;top:577px;width:25px;height:1px;background:#c8c8c8;"></div><div style="left:0px;top:598px;width:25px;height:1px;background:#c8c8c8;"></div><div style="left:0px;top:619px;width:25px;height:1px;background:#c8c8c8;"></div><div style="left:0px;top:640px;width:25px;height:1px;background:#c8c8c8;"></div><div style="left:0px;top:661px;width:25px;height:1px;background:#c8c8c8;"></div><div style="left:0px;top:682px;width:25px;height:1px;background:#c8c8c8;"></div><div style="left:0px;top:703px;width:25px;height:1px;background:#c8c8c8;"></div><div style="left:0px;top:724px;width:25px;height:1px;background:#c8c8c8;"></div><div style="left:0px;top:745px;width:25px;height:1px;background:#c8c8c8;"></div><div style="left:0px;top:766px;width:25px;height:1px;background:#c8c8c8;"></div><div style="left:0px;top:787px;width:25px;height:1px;background:#c8c8c8;"></div><div style="left:0px;top:808px;width:25px;height:1px;background:#c8c8c8;"></div><div style="left:0px;top:829px;width:25px;height:1px;background:#c8c8c8;"></div><div style="left:0px;top:850px;width:25px;height:1px;background:#c8c8c8;"></div><div style="left:0px;top:871px;width:25px;height:1px;background:#c8c8c8;"></div><div style="left:0px;top:892px;width:25px;height:1px;background:#c8c8c8;"></div><div class="t" style="left:-187px;width:400px;text-align:center;top:51.84px;font-size:12px;line-height:12px;color:#217346;">1</div><div class="t" style="left:-187px;width:400px;text-align:center;top:77.84px;font-size:12px;line-height:12px;color:#000;">2</div><div class="t" style="left:-187px;width:400px;text-align:center;top:98.84px;font-size:12px;line-height:12px;color:#000;">3</div><div class="t" style="left:-187px;width:400px;text-align:center;top:122.84px;font-size:12px;line-height:12px;color:#000;">4</div><div class="t" style="left:-187px;width:400px;text-align:center;top:143.84px;font-size:12px;line-height:12px;color:#000;">5</div><div class="t" style="left:-187px;width:400px;text-align:center;top:164.84px;font-size:12px;line-height:12px;color:#000;">6</div><div class="t" style="left:-187px;width:400px;text-align:center;top:185.84px;font-size:12px;line-height:12px;color:#000;">7</div><div class="t" style="left:-187px;width:400px;text-align:center;top:206.84px;font-size:12px;line-height:12px;color:#000;">8</div><div class="t" style="left:-187px;width:400px;text-align:center;top:227.84px;font-size:12px;line-height:12px;color:#000;">9</div><div class="t" style="left:-187px;width:400px;text-align:center;top:248.84px;font-size:12px;line-height:12px;color:#000;">10</div><div class="t" style="left:-187px;width:400px;text-align:center;top:269.84px;font-size:12px;line-height:12px;color:#000;">11</div><div class="t" style="left:-187px;width:400px;text-align:center;top:290.84px;font-size:12px;line-height:12px;color:#000;">12</div><div class="t" style="left:-187px;width:400px;text-align:center;top:311.84px;font-size:12px;line-height:12px;color:#000;">13</div><div class="t" style="left:-187px;width:400px;text-align:center;top:332.84px;font-size:12px;line-height:12px;color:#000;">14</div><div class="t" style="left:-187px;width:400px;text-align:center;top:353.84px;font-size:12px;line-height:12px;color:#000;">15</div><div class="t" style="left:-187px;width:400px;text-align:center;top:374.84px;font-size:12px;line-height:12px;color:#000;">16</div><div class="t" style="left:-187px;width:400px;text-align:center;top:395.84px;font-size:12px;line-height:12px;color:#000;">17</div><div class="t" style="left:-187px;width:400px;text-align:center;top:416.84px;font-size:12px;line-height:12px;color:#000;">18</div><div class="t" style="left:-187px;width:400px;text-align:center;top:437.84px;font-size:12px;line-height:12px;color:#000;">19</div><div class="t" style="left:-187px;width:400px;text-align:center;top:458.84px;font-size:12px;line-height:12px;color:#000;">20</div><div class="t" style="left:-187px;width:400px;text-align:center;top:479.84px;font-size:12px;line-height:12px;color:#000;">21</div><div class="t" style="left:-187px;width:400px;text-align:center;top:500.84px;font-size:12px;line-height:12px;color:#000;">22</div><div class="t" style="left:-187px;width:400px;text-align:center;top:521.84px;font-size:12px;line-height:12px;color:#000;">23</div><div class="t" style="left:-187px;width:400px;text-align:center;top:542.84px;font-size:12px;line-height:12px;color:#000;">24</div><div class="t" style="left:-187px;width:400px;text-align:center;top:563.84px;font-size:12px;line-height:12px;color:#000;">25</div><div class="t" style="left:-187px;width:400px;text-align:center;top:584.84px;font-size:12px;line-height:12px;color:#000;">26</div><div class="t" style="left:-187px;width:400px;text-align:center;top:605.84px;font-size:12px;line-height:12px;color:#000;">27</div><div class="t" style="left:-187px;width:400px;text-align:center;top:626.84px;font-size:12px;line-height:12px;color:#000;">28</div><div class="t" style="left:-187px;width:400px;text-align:center;top:647.84px;font-size:12px;line-height:12px;color:#000;">29</div><div class="t" style="left:-187px;width:400px;text-align:center;top:668.84px;font-size:12px;line-height:12px;color:#000;">30</div><div class="t" style="left:-187px;width:400px;text-align:center;top:689.84px;font-size:12px;line-height:12px;color:#000;">31</div><div class="t" style="left:-187px;width:400px;text-align:center;top:710.84px;font-size:12px;line-height:12px;color:#000;">32</div><div class="t" style="left:-187px;width:400px;text-align:center;top:731.84px;font-size:12px;line-height:12px;color:#000;">33</div><div class="t" style="left:-187px;width:400px;text-align:center;top:752.84px;font-size:12px;line-height:12px;color:#000;">34</div><div class="t" style="left:-187px;width:400px;text-align:center;top:773.84px;font-size:12px;line-height:12px;color:#000;">35</div><div class="t" style="left:-187px;width:400px;text-align:center;top:794.84px;font-size:12px;line-height:12px;color:#000;">36</div><div class="t" style="left:-187px;width:400px;text-align:center;top:815.84px;font-size:12px;line-height:12px;color:#000;">37</div><div class="t" style="left:-187px;width:400px;text-align:center;top:836.84px;font-size:12px;line-height:12px;color:#000;">38</div><div class="t" style="left:-187px;width:400px;text-align:center;top:857.84px;font-size:12px;line-height:12px;color:#000;">39</div><div class="t" style="left:-187px;width:400px;text-align:center;top:878.84px;font-size:12px;line-height:12px;color:#000;">40</div><div class="t" style="left:-187px;width:400px;text-align:center;top:899.84px;font-size:12px;line-height:12px;color:#000;">41</div><div style="left:24px;top:21px;width:43px;height:46px;border:2px solid #217346;"></div><div style="left:62px;top:62px;width:7px;height:7px;background:#fff;"></div><div style="left:63px;top:63px;width:5px;height:5px;background:#217346;"></div><div style="left:1894px;top:0px;width:27px;height:906px;background:#e6e6e6;"></div><div style="left:1894px;top:23px;width:1px;height:883px;background:#a6a6a6;"></div><div style="left:1898px;top:27px;width:19px;height:879px;background:#f0f0f0;"></div><div style="left:1898px;top:8px;width:19px;height:19px;background:#fff;border:1px solid #a6a6a6;"></div><svg style="left:1902px;top:13px" width="11" height="7"><polygon points="5.5,0.5 10,6 1,6" fill="#262626"/></svg><div style="left:1898px;top:27px;width:19px;height:720px;background:#fff;border:1px solid #a6a6a6;"></div><div style="left:1898px;top:887px;width:19px;height:19px;background:#fff;border:1px solid #a6a6a6;"></div><svg style="left:1902px;top:893px" width="11" height="7"><polygon points="1,1 10,1 5.5,6.5" fill="#262626"/></svg><div style="left:0px;top:906px;width:1921px;height:32px;background:#e6e6e6;"></div><div style="left:0px;top:906px;width:1921px;height:1px;background:#b0b0b0;"></div><svg style="left:29px;top:917px" width="8" height="12"><polygon points="6,0.5 6,10 0.5,5.25" fill="#c0c0c0"/></svg><svg style="left:61px;top:917px" width="8" height="12"><polygon points="0.5,0.5 6,5.25 0.5,10" fill="#c0c0c0"/></svg><div style="left:112px;top:910px;width:1px;height:24px;background:#a6a6a6;"></div><div style="left:229px;top:910px;width:1px;height:24px;background:#a6a6a6;"></div><div style="left:388px;top:910px;width:1px;height:24px;background:#a6a6a6;"></div><div style="left:514px;top:910px;width:1px;height:24px;background:#a6a6a6;"></div><div style="left:909px;top:910px;width:1px;height:24px;background:#a6a6a6;"></div><div style="left:988px;top:910px;width:1px;height:24px;background:#a6a6a6;"></div><div style="left:1067px;top:910px;width:1px;height:24px;background:#a6a6a6;"></div><div style="left:1146px;top:910px;width:1px;height:24px;background:#a6a6a6;"></div><div style="left:1219px;top:910px;width:1px;height:24px;background:#a6a6a6;"></div><div style="left:115px;top:909px;width:112px;height:26px;background:#4a4a4a;"></div><div style="left:232px;top:909px;width:154px;height:26px;background:#4a4a4a;"></div><div style="left:680px;top:906px;width:100px;height:29px;background:#fff;"></div><div style="left:680px;top:933px;width:100px;height:2px;background:#217346;"></div><div class="t" style="left:126.5px;top:911.61px;font-size:17px;line-height:17px;color:#fff;transform:scaleX(1.0126582278481011);transform-origin:left center;">Instructions</div><div class="t" style="left:244px;top:911.61px;font-size:17px;line-height:17px;color:#fff;transform:scaleX(0.9637188208616779);transform-origin:left center;">Explained Sheets</div><div class="t" style="left:402px;top:911.61px;font-size:17px;line-height:17px;color:#444;transform:scaleX(0.9948612538540597);transform-origin:left center;">Assumptions</div><div class="t" style="left:529.5px;top:911.61px;font-size:17px;line-height:17px;color:#444;transform:scaleX(1.0135135135135136);transform-origin:left center;">IncomeStatement</div><div class="t" style="left:692.5px;top:911.61px;font-size:17px;line-height:17px;color:#217346;font-weight:bold;transform:scaleX(0.9277708592777086);transform-origin:left center;">CashFlow</div><div class="t" style="left:793.5px;top:911.61px;font-size:17px;line-height:17px;color:#444;transform:scaleX(0.9546313799621928);transform-origin:left center;">BalanceSheet</div><div class="t" style="left:922px;top:911.61px;font-size:17px;line-height:17px;color:#444;transform:scaleX(0.9390681003584229);transform-origin:left center;">Loans1</div><div class="t" style="left:1001.4px;top:911.61px;font-size:17px;line-height:17px;color:#444;transform:scaleX(0.931899641577061);transform-origin:left center;">Loans2</div><div class="t" style="left:1080px;top:911.61px;font-size:17px;line-height:17px;color:#444;transform:scaleX(0.9408602150537635);transform-origin:left center;">Loans3</div><div class="t" style="left:1158px;top:911.61px;font-size:17px;line-height:17px;color:#444;transform:scaleX(0.8941605839416059);transform-origin:left center;">Leases</div><svg style="left:1257px;top:912px" width="22" height="22"><circle cx="11" cy="11" r="9.5" fill="none" stroke="#6d6d6d" stroke-width="1.2"/><path d="M11 6V15.5M6 11H15.5" stroke="#6d6d6d" stroke-width="1.6"/></svg><div style="left:1520px;top:917px;width:2px;height:2px;background:#a6a6a6;"></div><div style="left:1520px;top:922px;width:2px;height:2px;background:#a6a6a6;"></div><div style="left:1520px;top:927px;width:2px;height:2px;background:#a6a6a6;"></div><div style="left:1540px;top:913px;width:352px;height:19px;background:#f0f0f0;"></div><div style="left:1540px;top:913px;width:19px;height:19px;background:#fff;border:1px solid #a6a6a6;"></div><svg style="left:1545px;top:917px" width="8" height="11"><polygon points="6,0.5 6,10.5 0.5,5.5" fill="#262626"/></svg><div style="left:1559px;top:913px;width:181px;height:19px;background:#fff;border:1px solid #a6a6a6;"></div><div style="left:1874px;top:913px;width:19px;height:19px;background:#fff;border:1px solid #a6a6a6;"></div><svg style="left:1880px;top:917px" width="8" height="11"><polygon points="1,0.5 7,5.5 1,10.5" fill="#262626"/></svg><div style="left:1920px;top:0px;width:1px;height:938px;background:#000;"></div><div style="left:0px;top:938px;width:1921px;height:28px;background:#f3f3f3;"></div><div style="left:0px;top:938px;width:1921px;height:1px;background:#d4d4d4;"></div><div style="left:0px;top:965px;width:1921px;height:1px;background:#8a8a8a;"></div><div class="t" style="left:14px;top:947.04px;font-size:12px;line-height:12px;color:#262626;">Ready</div><div class="t" style="left:71px;top:947.04px;font-size:12px;line-height:12px;color:#262626;transform:scaleX(1.026);transform-origin:left center;">Calculate</div><svg style="left:149px;top:943px" width="18" height="18"><rect x="1.5" y="5.5" width="14" height="11" fill="none" stroke="#666"/><rect x="6" y="2" width="10" height="3.5" fill="#666"/><circle cx="4.5" cy="4.2" r="3.6" fill="#666"/><path d="M3.5 9.5h2M7 9.5h2M10.5 9.5h2M3.5 12.5h2M7 12.5h2M10.5 12.5h2" stroke="#777"/></svg><svg style="left:187px;top:943px" width="23" height="20"><path d="M11 2 A8 8 0 0 0 11 18" fill="none" stroke="#555" stroke-width="1.3" stroke-dasharray="2.6 1.6"/><path d="M9.5 0.5V8M7.5 6L9.5 8L11.5 6M9 7.5H16.5M14.5 5.5L16.5 7.5L14.5 9.5" fill="none" stroke="#444" stroke-width="1.2"/><path d="M12 10.5L20.5 19M20.5 10.5L12 19" stroke="#333" stroke-width="2"/></svg><div class="t" style="left:211.5px;top:946.45px;font-size:12.7px;line-height:12.7px;color:#262626;font-weight:bold;transform:scaleX(0.998681608437706);transform-origin:left center;">Accessibility: Investigate</div><svg style="left:1408px;top:942px" width="22" height="22"><rect x="1" y="1" width="19" height="12.5" rx="1.5" fill="#555"/><path d="M5 18.5h4" stroke="#555" stroke-width="1.3"/><circle cx="14.5" cy="14.5" r="5.5" fill="#f3f3f3"/><circle cx="14.5" cy="14.5" r="3.6" fill="none" stroke="#555" stroke-width="2.4"/><circle cx="14.5" cy="14.5" r="5" fill="none" stroke="#555" stroke-width="1.6" stroke-dasharray="2 1.93"/></svg><div class="t" style="left:1430px;top:946.36px;font-size:12.8px;line-height:12.8px;color:#262626;transform:scaleX(1.0032715376226826);transform-origin:left center;">Display Settings</div><div style="left:1547px;top:939px;width:50px;height:26px;background:#c8c8c8;"></div><svg style="left:1563px;top:943px" width="18" height="18"><rect x="1.5" y="1.5" width="15" height="15" fill="none" stroke="#6a6a6a"/><path d="M1.5 6.5h15M1.5 11.5h15M6.5 1.5v15M11.5 1.5v15" stroke="#6a6a6a"/></svg><svg style="left:1612px;top:943px" width="19" height="18"><rect x="1.5" y="1.5" width="16" height="14" fill="none" stroke="#666"/><rect x="5.5" y="3.5" width="8" height="10" fill="none" stroke="#666"/><path d="M7 6.5h5M7 8.5h5M7 10.5h5" stroke="#666"/></svg><svg style="left:1662px;top:943px" width="19" height="18"><rect x="1.5" y="1.5" width="16" height="15" fill="none" stroke="#666"/><path d="M6.5 1.5v9M11.5 1.5v9M1.5 10.5h10" fill="none" stroke="#666"/></svg><div style="left:1703px;top:951px;width:10px;height:1px;background:#444;"></div><div style="left:1720px;top:951px;width:125px;height:1px;background:#6a6a6a;"></div><div style="left:1767px;top:944px;width:5px;height:14px;background:#444;"></div><div style="left:1782px;top:947px;width:1px;height:8px;background:#6a6a6a;"></div><div style="left:1850px;top:951px;width:11px;height:1px;background:#444;"></div><div style="left:1855px;top:946px;width:1px;height:11px;background:#444;"></div><div class="t" style="left:1877px;top:947.04px;font-size:12px;line-height:12px;color:#262626;">80%</div></body></html>
